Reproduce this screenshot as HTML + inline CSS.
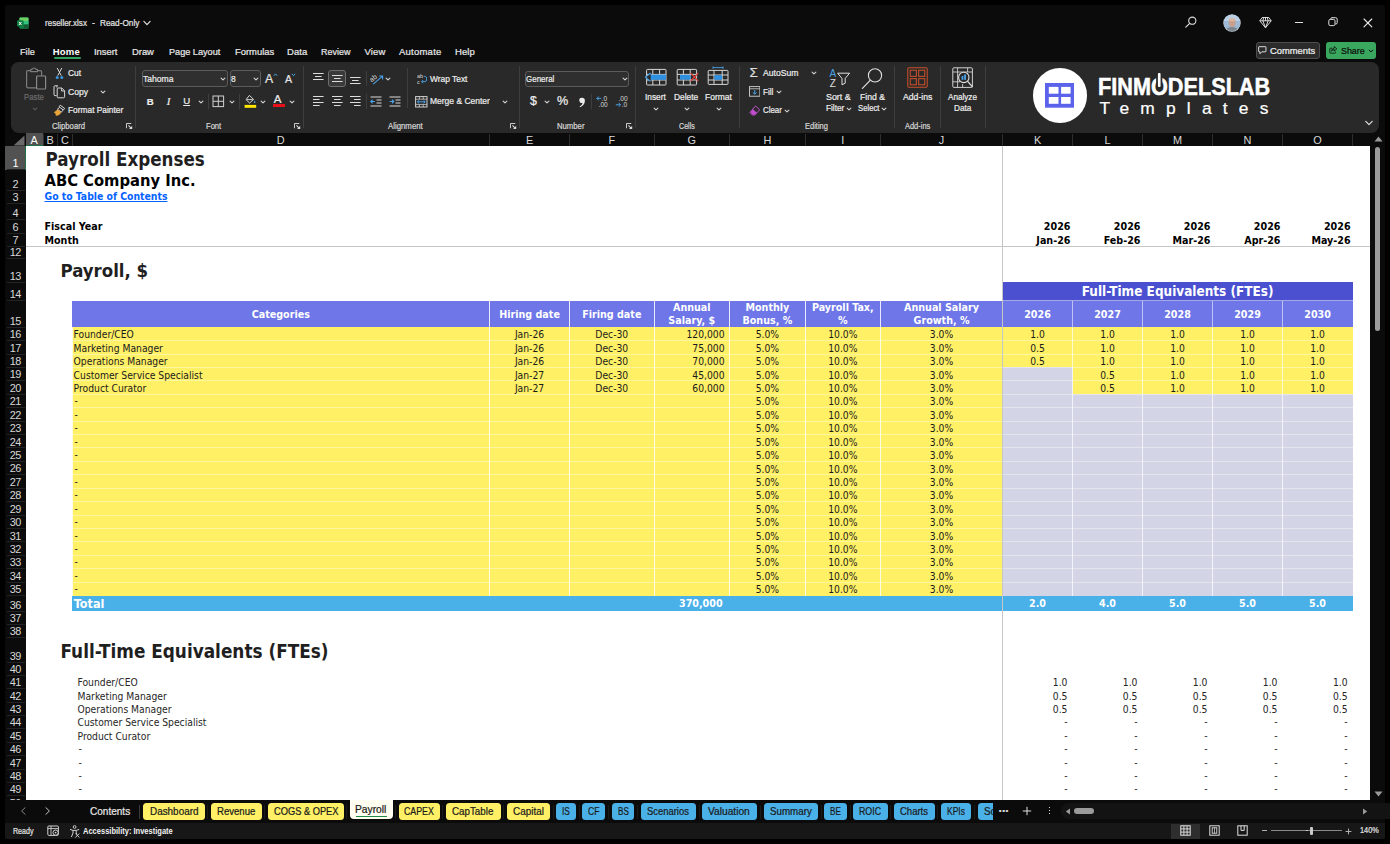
<!DOCTYPE html><html><head><meta charset="utf-8"><title>reseller.xlsx</title><style>html,body{margin:0;padding:0}
body{width:1390px;height:844px;background:#000;position:relative;overflow:hidden;font-family:"Liberation Sans",sans-serif;font-size:11px;color:#e6e6e6}
div,span,svg,a{position:absolute;box-sizing:border-box;white-space:nowrap}
.ui{font-family:"Liberation Sans",sans-serif;-webkit-text-stroke:0.22px currentColor}
.cell{font-family:"DejaVu Sans Condensed","DejaVu Sans",sans-serif;font-stretch:condensed;font-size:10.25px;color:#1a1a1a;line-height:13.42px}
.b{font-weight:bold}
.c{text-align:center}
.r{text-align:right}
.ch{color:#d8d8d8;font-size:10.9px;text-align:center;line-height:15px;top:133px;height:13px}
.rh{color:#d8d8d8;font-size:10.9px;letter-spacing:-0.55px;text-align:center;left:5px;width:20.5px}
.hd{color:#fff;font-weight:bold;text-align:center;font-size:10.65px;line-height:12.6px}
</style></head><body>
<div style="left:5px;top:5px;width:1380px;height:834px;background:#0b0b0b;border-radius:2px"></div>
<svg style="left:17px;top:16.5px" width="12" height="12" viewBox="0 0 12 12"><rect x="2.5" y="0.5" width="9" height="11" rx="1" fill="#21a366"/>
<rect x="2.5" y="0.5" width="9" height="3.6" rx="1" fill="#6fd163"/><rect x="7" y="4" width="4.5" height="3.6" fill="#33c481"/><rect x="2.5" y="7.6" width="9" height="3.9" rx="1" fill="#107c41"/><rect x="7" y="7.6" width="4.5" height="3.9" fill="#185c37"/>
<rect x="0" y="3.2" width="6.4" height="6.4" rx="0.8" fill="#107c41"/><path d="M1.9 4.9L4.5 8M4.5 4.9L1.9 8" stroke="#fff" stroke-width="1" /></svg>
<div class="ui" style="left:45.3px;top:16.2px;line-height:13.4px;font-size:9.4px;color:#e4e4e4;transform:scaleX(0.8553);transform-origin:0 50%;">reseller.xlsx</div>
<div class="ui" style="left:92.2px;top:16.2px;line-height:13.4px;font-size:9.4px;color:#e4e4e4;transform:scaleX(0.9583);transform-origin:0 50%;">-</div>
<div class="ui" style="left:100px;top:16.2px;line-height:13.4px;font-size:9.4px;color:#e4e4e4;transform:scaleX(0.8791);transform-origin:0 50%;">Read-Only</div>
<svg style="left:142.6px;top:20.1px" width="8" height="6" viewBox="0 0 8 6"><path d="M0.8999999999999999 1.45L4 4.55L7.1 1.45" fill="none" stroke="#e0e0e0" stroke-width="1.2" stroke-linecap="round" stroke-linejoin="round"/></svg>
<svg style="left:1184px;top:15px" width="14" height="14" viewBox="0 0 14 14"><circle cx="8.3" cy="5.7" r="3.6" fill="none" stroke="#ddd" stroke-width="1.1"/><path d="M5.7 8.3L1.8 12.2" stroke="#ddd" stroke-width="1.2" stroke-linecap="round"/></svg>
<svg style="left:1222.5px;top:13.5px" width="18" height="18" viewBox="0 0 18 18"><defs><clipPath id="av"><circle cx="9" cy="9" r="8.3"/></clipPath></defs>
<circle cx="9" cy="9" r="8.7" fill="#c8d0d8"/>
<g clip-path="url(#av)"><rect width="18" height="18" fill="#9db9d6"/><rect y="0" width="18" height="7" fill="#b9cfe6"/>
<ellipse cx="9" cy="17.5" rx="7" ry="4.5" fill="#7d8790"/><ellipse cx="9.2" cy="8.6" rx="3.4" ry="4.3" fill="#c79f8c"/><ellipse cx="9.2" cy="5.6" rx="3.2" ry="1.8" fill="#d9b8a6"/></g></svg>
<svg style="left:1258.5px;top:15.5px" width="13" height="13" viewBox="0 0 13 13"><path d="M3.2 1.5H9.8L12.2 4.8L6.5 11.8L0.8 4.8Z M0.8 4.8H12.2 M4.6 1.5L3.9 4.8L6.5 11.8L9.1 4.8L8.4 1.5 M6.5 1.5V4.8" fill="none" stroke="#e6e6e6" stroke-width="0.95" stroke-linejoin="round"/></svg>
<div style="left:1295px;top:21.6px;width:7.5px;height:1.1px;background:#e0e0e0"></div>
<svg style="left:1328px;top:17px" width="10" height="10" viewBox="0 0 10 10"><rect x="0.8" y="2.4" width="6.2" height="6.2" rx="1.4" fill="none" stroke="#e0e0e0" stroke-width="1"/><path d="M2.8 2.2V1.9Q2.8 0.7 4 0.7H7.6Q9.2 0.7 9.2 2.3V5.6Q9.2 7 7.9 7H7.3" fill="none" stroke="#e0e0e0" stroke-width="1"/></svg>
<svg style="left:1363px;top:17.5px" width="10" height="10" viewBox="0 0 10 10"><path d="M1 1L8.8 8.8M8.8 1L1 8.8" stroke="#e8e8e8" stroke-width="1.1" stroke-linecap="round"/></svg>
<div class="ui" style="left:19.7px;top:44.55px;line-height:13.5px;font-size:9.5px;color:#e8e8e8;transform:scaleX(0.9668);transform-origin:0 50%;">File</div>
<div class="ui" style="left:52.8px;top:44.55px;line-height:13.5px;font-size:9.5px;color:#fff;letter-spacing:0.176px;font-weight:bold;-webkit-text-stroke:0;">Home</div>
<div class="ui" style="left:94.3px;top:44.55px;line-height:13.5px;font-size:9.5px;color:#e8e8e8;transform:scaleX(0.9849);transform-origin:0 50%;">Insert</div>
<div class="ui" style="left:132.3px;top:44.55px;line-height:13.5px;font-size:9.5px;color:#e8e8e8;transform:scaleX(0.9879);transform-origin:0 50%;">Draw</div>
<div class="ui" style="left:168.5px;top:44.55px;line-height:13.5px;font-size:9.5px;color:#e8e8e8;transform:scaleX(0.9616);transform-origin:0 50%;">Page Layout</div>
<div class="ui" style="left:234.7px;top:44.55px;line-height:13.5px;font-size:9.5px;color:#e8e8e8;transform:scaleX(0.9901);transform-origin:0 50%;">Formulas</div>
<div class="ui" style="left:287.1px;top:44.55px;line-height:13.5px;font-size:9.5px;color:#e8e8e8;letter-spacing:0.058px;">Data</div>
<div class="ui" style="left:321.3px;top:44.55px;line-height:13.5px;font-size:9.5px;color:#e8e8e8;transform:scaleX(0.9438);transform-origin:0 50%;">Review</div>
<div class="ui" style="left:364.4px;top:44.55px;line-height:13.5px;font-size:9.5px;color:#e8e8e8;letter-spacing:0.170px;">View</div>
<div class="ui" style="left:398.9px;top:44.55px;line-height:13.5px;font-size:9.5px;color:#e8e8e8;letter-spacing:0.255px;">Automate</div>
<div class="ui" style="left:455.1px;top:44.55px;line-height:13.5px;font-size:9.5px;color:#e8e8e8;letter-spacing:0.065px;">Help</div>
<div style="left:53.5px;top:57.2px;width:27px;height:1.6px;background:#2f9f5b;border-radius:1px"></div>
<div style="left:1255.5px;top:41.5px;width:64.5px;height:17.5px;background:#2b2b2b;border:1px solid #4e4e4e;border-radius:3px"></div>
<svg style="left:1258.3px;top:45.6px" width="8.6" height="8.6" viewBox="0 0 9.6 9.6"><path d="M1.2 0.8H8.4Q8.9 0.8 8.9 1.3V6Q8.9 6.5 8.4 6.5H4.2L2.2 8.6V6.5H1.2Q0.7 6.5 0.7 6V1.3Q0.7 0.8 1.2 0.8Z" fill="none" stroke="#e8e8e8" stroke-width="1.05" stroke-linejoin="round"/></svg>
<div class="ui" style="left:1270px;top:44.35px;line-height:13.5px;font-size:9.5px;color:#f0f0f0;transform:scaleX(0.9863);transform-origin:0 50%;">Comments</div>
<div style="left:1326px;top:41.5px;width:50.3px;height:17.5px;background:#3aa75e;border-radius:3px"></div>
<svg style="left:1329px;top:45.6px" width="8.8" height="8" viewBox="0 0 11 10"><path d="M4.2 2.8H1.8Q1 2.8 1 3.6V8.2Q1 9 1.8 9H7.4Q8.2 9 8.2 8.2V7.2" fill="none" stroke="#0b0b0b" stroke-width="0.95"/><path d="M6.6 0.8L9.8 3.6L6.6 6.3V4.6Q4.4 4.5 3.2 6.4Q3.5 3 6.6 2.6Z" fill="none" stroke="#0b0b0b" stroke-width="1" stroke-linejoin="round"/></svg>
<div class="ui" style="left:1340.5px;top:44.35px;line-height:13.5px;font-size:9.5px;color:#0b0b0b;transform:scaleX(0.9349);transform-origin:0 50%;">Share</div>
<svg style="left:1366.6px;top:47.6px" width="8" height="6" viewBox="0 0 8 6"><path d="M2.2 2.1L4 3.9L5.8 2.1" fill="none" stroke="#0b0b0b" stroke-width="1" stroke-linecap="round" stroke-linejoin="round"/></svg>
<div style="left:11px;top:62px;width:1368px;height:71px;background:#292929;border-radius:8px"></div>
<div style="left:135px;top:66px;width:1px;height:62px;background:#3e3e3e"></div>
<div style="left:303px;top:66px;width:1px;height:62px;background:#3e3e3e"></div>
<div style="left:518.5px;top:66px;width:1px;height:62px;background:#3e3e3e"></div>
<div style="left:634.5px;top:66px;width:1px;height:62px;background:#3e3e3e"></div>
<div style="left:738.5px;top:66px;width:1px;height:62px;background:#3e3e3e"></div>
<div style="left:894.3px;top:66px;width:1px;height:62px;background:#3e3e3e"></div>
<div style="left:939.5px;top:66px;width:1px;height:62px;background:#3e3e3e"></div>
<div style="left:984.8px;top:66px;width:1px;height:62px;background:#3e3e3e"></div>
<div class="ui" style="left:51.8px;top:121px;line-height:12.2px;font-size:8.2px;color:#d6d6d6;transform:scaleX(0.9430);transform-origin:0 50%;">Clipboard</div>
<div class="ui" style="left:205.7px;top:121px;line-height:12.2px;font-size:8.2px;color:#d6d6d6;transform:scaleX(0.9264);transform-origin:0 50%;">Font</div>
<div class="ui" style="left:387.8px;top:121px;line-height:12.2px;font-size:8.2px;color:#d6d6d6;transform:scaleX(0.9543);transform-origin:0 50%;">Alignment</div>
<div class="ui" style="left:557.1px;top:121px;line-height:12.2px;font-size:8.2px;color:#d6d6d6;transform:scaleX(0.9429);transform-origin:0 50%;">Number</div>
<div class="ui" style="left:678.9px;top:121px;line-height:12.2px;font-size:8.2px;color:#d6d6d6;transform:scaleX(0.8669);transform-origin:0 50%;">Cells</div>
<div class="ui" style="left:805.4px;top:121px;line-height:12.2px;font-size:8.2px;color:#d6d6d6;transform:scaleX(0.9133);transform-origin:0 50%;">Editing</div>
<div class="ui" style="left:904.7px;top:121px;line-height:12.2px;font-size:8.2px;color:#d6d6d6;transform:scaleX(0.9099);transform-origin:0 50%;">Add-ins</div>
<svg style="left:126.3px;top:122.8px" width="6.6" height="6.6" viewBox="0 0 7 7"><path d="M0.5 5.6V0.5H5.6" fill="none" stroke="#dadada" stroke-width="1"/><path d="M2.6 2.6L5.6 5.6" fill="none" stroke="#dadada" stroke-width="1.1"/><path d="M6.6 3V6.6H3Z" fill="#dadada"/></svg>
<svg style="left:294.3px;top:122.8px" width="6.6" height="6.6" viewBox="0 0 7 7"><path d="M0.5 5.6V0.5H5.6" fill="none" stroke="#dadada" stroke-width="1"/><path d="M2.6 2.6L5.6 5.6" fill="none" stroke="#dadada" stroke-width="1.1"/><path d="M6.6 3V6.6H3Z" fill="#dadada"/></svg>
<svg style="left:510.3px;top:122.8px" width="6.6" height="6.6" viewBox="0 0 7 7"><path d="M0.5 5.6V0.5H5.6" fill="none" stroke="#dadada" stroke-width="1"/><path d="M2.6 2.6L5.6 5.6" fill="none" stroke="#dadada" stroke-width="1.1"/><path d="M6.6 3V6.6H3Z" fill="#dadada"/></svg>
<svg style="left:626.3px;top:122.8px" width="6.6" height="6.6" viewBox="0 0 7 7"><path d="M0.5 5.6V0.5H5.6" fill="none" stroke="#dadada" stroke-width="1"/><path d="M2.6 2.6L5.6 5.6" fill="none" stroke="#dadada" stroke-width="1.1"/><path d="M6.6 3V6.6H3Z" fill="#dadada"/></svg>
<svg style="left:24px;top:66px" width="24" height="25" viewBox="0 0 24 25"><rect x="2.6" y="4.6" width="15" height="17.2" rx="1.2" fill="none" stroke="#7c7c7c" stroke-width="1.2"/>
<path d="M6.6 5.6V4.2Q6.6 3.4 7.4 3.4H8.2Q8.6 2 10.1 2Q11.6 2 12 3.4H12.8Q13.6 3.4 13.6 4.2V5.6Z" fill="#292929" stroke="#7c7c7c" stroke-width="1.1" stroke-linejoin="round"/>
<rect x="12.6" y="10" width="9" height="13" rx="0.8" fill="#292929" stroke="#8a8a8a" stroke-width="1.2"/></svg>
<div class="ui" style="left:24.2px;top:91.4px;line-height:13.2px;font-size:9.2px;color:#6b6b6b;transform:scaleX(0.8459);transform-origin:0 50%;">Paste</div>
<svg style="left:30.5px;top:105.8px" width="8" height="6" viewBox="0 0 8 6"><path d="M2.2 2.1L4 3.9L5.8 2.1" fill="none" stroke="#5a5a5a" stroke-width="1.1" stroke-linecap="round" stroke-linejoin="round"/></svg>
<svg style="left:54px;top:66.5px" width="11" height="13" viewBox="0 0 11 13"><path d="M3.2 1L7.2 8.6M7.8 1L3.8 8.6" stroke="#d8d8d8" stroke-width="1" fill="none"/><circle cx="3.2" cy="10.6" r="1.5" fill="#3a96e0"/><circle cx="7.8" cy="10.6" r="1.5" fill="#3a96e0"/></svg>
<div class="ui" style="left:67.6px;top:67.1px;line-height:13.2px;font-size:9.2px;color:#ededed;transform:scaleX(0.9080);transform-origin:0 50%;">Cut</div>
<svg style="left:52.5px;top:85px" width="13" height="14" viewBox="0 0 13 14"><path d="M3.8 2.5V1.6Q3.8 0.8 4.6 0.8H2Q1 0.8 1 1.8V9.6Q1 10.6 2 10.6H3.6" fill="none" stroke="#d8d8d8" stroke-width="1"/><path d="M5.2 3H8.8L11.6 5.8V11.8Q11.6 12.8 10.6 12.8H5.2Q4.2 12.8 4.2 11.8V4Q4.2 3 5.2 3ZM8.6 3.2V6H11.4" fill="none" stroke="#d8d8d8" stroke-width="1" stroke-linejoin="round"/></svg>
<div class="ui" style="left:67.6px;top:85.7px;line-height:13.2px;font-size:9.2px;color:#ededed;transform:scaleX(0.9312);transform-origin:0 50%;">Copy</div>
<svg style="left:99px;top:89px" width="8" height="6" viewBox="0 0 8 6"><path d="M2.1 2.05L4 3.95L5.9 2.05" fill="none" stroke="#d0d0d0" stroke-width="1.1" stroke-linecap="round" stroke-linejoin="round"/></svg>
<svg style="left:53px;top:103.5px" width="13" height="13" viewBox="0 0 13 13"><path d="M7.2 1.2L11.6 4.4L10.4 6L6 2.8Z" fill="none" stroke="#d8d8d8" stroke-width="1" stroke-linejoin="round"/><path d="M6.4 3.6L4.4 5.2L8.4 8.2L9.8 6.2" fill="none" stroke="#d8d8d8" stroke-width="1"/><path d="M4.6 5.8L1.2 8.4Q3.4 9 3 11.4Q6.6 11.6 8 8.2Z" fill="#e8a33a" stroke="#e8a33a" stroke-width="0.6" stroke-linejoin="round"/></svg>
<div class="ui" style="left:67.6px;top:104.3px;line-height:13.2px;font-size:9.2px;color:#ededed;transform:scaleX(0.9089);transform-origin:0 50%;">Format Painter</div>
<div style="left:141.5px;top:70px;width:86.5px;height:17px;background:#2f2f2f;border:1px solid #5c5c5c;border-radius:3px"></div>
<div class="ui" style="left:142.8px;top:72.8px;line-height:13.2px;font-size:9.2px;color:#ededed;transform:scaleX(0.9318);transform-origin:0 50%;">Tahoma</div>
<svg style="left:218.7px;top:76px" width="8" height="6" viewBox="0 0 8 6"><path d="M2.1 2.05L4 3.95L5.9 2.05" fill="none" stroke="#d0d0d0" stroke-width="1.1" stroke-linecap="round" stroke-linejoin="round"/></svg>
<div style="left:229.5px;top:70px;width:31.5px;height:17px;background:#2f2f2f;border:1px solid #5c5c5c;border-radius:3px"></div>
<div class="ui" style="left:230.8px;top:72.8px;line-height:13.2px;font-size:9.2px;color:#ededed;transform:scaleX(0.9185);transform-origin:0 50%;">8</div>
<svg style="left:252px;top:76px" width="8" height="6" viewBox="0 0 8 6"><path d="M2.1 2.05L4 3.95L5.9 2.05" fill="none" stroke="#d0d0d0" stroke-width="1.1" stroke-linecap="round" stroke-linejoin="round"/></svg>
<div class="ui" style="left:265px;top:70.9px;line-height:16.2px;font-size:12.2px;color:#e6e6e6;">A</div>
<svg style="left:272.8px;top:72.5px" width="5" height="3.4" viewBox="0 0 5 3.4"><path d="M0.8 2.8L2.5 0.9L4.2 2.8" fill="none" stroke="#4aa3e8" stroke-width="1"/></svg>
<div class="ui" style="left:285px;top:72.3px;line-height:14.6px;font-size:10.6px;color:#e6e6e6;">A</div>
<svg style="left:291.3px;top:72.8px" width="5" height="3.4" viewBox="0 0 5 3.4"><path d="M0.8 0.8L2.5 2.7L4.2 0.8" fill="none" stroke="#4aa3e8" stroke-width="1"/></svg>
<div class="ui" style="left:146.8px;top:94.8px;line-height:13.6px;font-size:9.6px;color:#ededed;font-weight:bold">B</div>
<div class="ui" style="left:166.8px;top:94.1px;line-height:14.6px;font-size:10.6px;color:#ededed;font-style:italic;font-family:'Liberation Serif',serif;font-size:10.8px">I</div>
<div class="ui" style="left:183.2px;top:94.4px;line-height:13.6px;font-size:9.6px;color:#ededed;text-decoration:underline">U</div>
<svg style="left:196.5px;top:98.6px" width="8" height="6" viewBox="0 0 8 6"><path d="M2.1 2.05L4 3.95L5.9 2.05" fill="none" stroke="#d0d0d0" stroke-width="1.1" stroke-linecap="round" stroke-linejoin="round"/></svg>
<div style="left:207.5px;top:94px;width:1px;height:15px;background:#3e3e3e"></div>
<svg style="left:211.5px;top:95px" width="13" height="13" viewBox="0 0 13 13"><rect x="1" y="1" width="10.6" height="10.6" fill="none" stroke="#d0d0d0" stroke-width="1"/><path d="M6.3 1V11.6M1 6.3H11.6" stroke="#d0d0d0" stroke-width="1"/></svg>
<svg style="left:227.8px;top:98.6px" width="8" height="6" viewBox="0 0 8 6"><path d="M2.1 2.05L4 3.95L5.9 2.05" fill="none" stroke="#d0d0d0" stroke-width="1.1" stroke-linecap="round" stroke-linejoin="round"/></svg>
<div style="left:239px;top:94px;width:1px;height:15px;background:#3e3e3e"></div>
<svg style="left:243.5px;top:93.5px" width="13" height="14" viewBox="0 0 13 14"><path d="M5.4 1.4L9.6 5.4L5.6 9L2 5.6Z" fill="none" stroke="#e0e0e0" stroke-width="0.95" stroke-linejoin="round"/><path d="M3 5.6H8.8" stroke="#e0e0e0" stroke-width="0.9"/><path d="M10.6 6.4Q11.8 8 11.2 8.8Q10.6 9.4 10 8.8Q9.5 8 10.6 6.4Z" fill="#4aa3e8"/><rect x="0.6" y="10.9" width="11.6" height="2.9" fill="#ffe600"/></svg>
<svg style="left:259px;top:98.6px" width="8" height="6" viewBox="0 0 8 6"><path d="M2.1 2.05L4 3.95L5.9 2.05" fill="none" stroke="#d0d0d0" stroke-width="1.1" stroke-linecap="round" stroke-linejoin="round"/></svg>
<div class="ui" style="left:273.8px;top:91.85px;line-height:15.5px;font-size:11.5px;color:#ededed;">A</div>
<div style="left:273px;top:104.4px;width:11.6px;height:2.9px;background:#e8101a"></div>
<svg style="left:288px;top:98.6px" width="8" height="6" viewBox="0 0 8 6"><path d="M2.1 2.05L4 3.95L5.9 2.05" fill="none" stroke="#d0d0d0" stroke-width="1.1" stroke-linecap="round" stroke-linejoin="round"/></svg>
<svg style="left:312.6px;top:72.8px" width="12" height="12" viewBox="0 0 12 12"><rect x="0" y="0" width="10.6" height="1" fill="#dcdcdc"/><rect x="2" y="3" width="6.6" height="1" fill="#dcdcdc"/><rect x="0" y="6" width="10.6" height="1" fill="#dcdcdc"/></svg>
<div style="left:328px;top:70px;width:18px;height:17px;background:#3a3a3a;border:1px solid #6e6e6e;border-radius:3px"></div>
<svg style="left:331.8px;top:75px" width="12" height="12" viewBox="0 0 12 12"><rect x="0" y="0" width="10.6" height="1" fill="#dcdcdc"/><rect x="2" y="3" width="6.6" height="1" fill="#dcdcdc"/><rect x="0" y="6" width="10.6" height="1" fill="#dcdcdc"/></svg>
<svg style="left:350.4px;top:77.4px" width="12" height="12" viewBox="0 0 12 12"><rect x="0" y="0" width="10.6" height="1" fill="#dcdcdc"/><rect x="2" y="3" width="6.6" height="1" fill="#dcdcdc"/><rect x="0" y="6" width="10.6" height="1" fill="#dcdcdc"/></svg>
<div style="left:365.5px;top:71px;width:1px;height:15px;background:#3e3e3e"></div>
<svg style="left:369.5px;top:71.5px" width="15" height="14" viewBox="0 0 15 14"><text x="0.2" y="9" font-family="Liberation Sans, sans-serif" font-size="7" fill="#d8d8d8" transform="rotate(-38 3 8)">ab</text><path d="M3.2 12.2L12.2 4.4M12.6 7.4V4H9.2" fill="none" stroke="#4aa3e8" stroke-width="1.1"/></svg>
<svg style="left:384px;top:76.4px" width="8" height="6" viewBox="0 0 8 6"><path d="M2.1 2.05L4 3.95L5.9 2.05" fill="none" stroke="#d0d0d0" stroke-width="1.1" stroke-linecap="round" stroke-linejoin="round"/></svg>
<div style="left:407px;top:68px;width:1px;height:40px;background:#3e3e3e"></div>
<svg style="left:417px;top:72.8px" width="10.4" height="12.4" viewBox="0 0 12 13"><text x="0" y="5.6" font-family="Liberation Sans, sans-serif" font-size="6.4" fill="#d8d8d8">ab</text><text x="0" y="12" font-family="Liberation Sans, sans-serif" font-size="6.4" fill="#d8d8d8">c</text><path d="M7.8 3.2H9.6Q11.2 3.2 11.2 6.2Q11.2 9.4 9.2 9.4H5.4M7 7.6L5.2 9.4L7 11.2" fill="none" stroke="#4aa3e8" stroke-width="1.1"/></svg>
<div class="ui" style="left:429.5px;top:72.9px;line-height:13.2px;font-size:9.2px;color:#ededed;transform:scaleX(0.9129);transform-origin:0 50%;">Wrap Text</div>
<svg style="left:312.6px;top:96px" width="12" height="12" viewBox="0 0 12 12"><rect x="0" y="0" width="10.6" height="1" fill="#dcdcdc"/><rect x="0" y="3" width="6.6" height="1" fill="#dcdcdc"/><rect x="0" y="6" width="10.6" height="1" fill="#dcdcdc"/><rect x="0" y="9" width="6.6" height="1" fill="#dcdcdc"/></svg>
<svg style="left:331.6px;top:96px" width="12" height="12" viewBox="0 0 12 12"><rect x="0" y="0" width="10.6" height="1" fill="#dcdcdc"/><rect x="2" y="3" width="6.6" height="1" fill="#dcdcdc"/><rect x="0" y="6" width="10.6" height="1" fill="#dcdcdc"/><rect x="2" y="9" width="6.6" height="1" fill="#dcdcdc"/></svg>
<svg style="left:350.4px;top:96px" width="12" height="12" viewBox="0 0 12 12"><rect x="0" y="0" width="10.6" height="1" fill="#dcdcdc"/><rect x="4" y="3" width="6.6" height="1" fill="#dcdcdc"/><rect x="0" y="6" width="10.6" height="1" fill="#dcdcdc"/><rect x="4" y="9" width="6.6" height="1" fill="#dcdcdc"/></svg>
<div style="left:365.5px;top:94px;width:1px;height:15px;background:#3e3e3e"></div>
<svg style="left:369.8px;top:95.5px" width="13" height="12" viewBox="0 0 13 12"><path d="M0.5 1H11.5M6.5 4H11.5M6.5 7H11.5M0.5 10H11.5" stroke="#dcdcdc" stroke-width="1"/><path d="M5 5.5H0.8M2.6 3.7L0.8 5.5L2.6 7.3" fill="none" stroke="#4aa3e8" stroke-width="1.1"/></svg>
<svg style="left:388.6px;top:95.5px" width="13" height="12" viewBox="0 0 13 12"><path d="M0.5 1H11.5M6.5 4H11.5M6.5 7H11.5M0.5 10H11.5" stroke="#dcdcdc" stroke-width="1"/><path d="M0.6 5.5H4.8M3 3.7L4.8 5.5L3 7.3" fill="none" stroke="#4aa3e8" stroke-width="1.1"/></svg>
<svg style="left:415px;top:95.5px" width="13" height="12" viewBox="0 0 13 12"><rect x="0.6" y="0.6" width="11.4" height="10.4" fill="none" stroke="#d0d0d0" stroke-width="1"/><path d="M0.6 3.2H12M0.6 8.4H12M4.4 0.6V3.2M8.2 0.6V3.2M4.4 8.4V11M8.2 8.4V11" stroke="#d0d0d0" stroke-width="0.8"/><path d="M2.4 5.8H10.2M4 4.4L2.4 5.8L4 7.2M8.6 4.4L10.2 5.8L8.6 7.2" fill="none" stroke="#4aa3e8" stroke-width="1"/></svg>
<div class="ui" style="left:429.5px;top:95.4px;line-height:13.2px;font-size:9.2px;color:#ededed;transform:scaleX(0.9224);transform-origin:0 50%;">Merge &amp; Center</div>
<svg style="left:501px;top:98.8px" width="8" height="6" viewBox="0 0 8 6"><path d="M2.1 2.05L4 3.95L5.9 2.05" fill="none" stroke="#d0d0d0" stroke-width="1.1" stroke-linecap="round" stroke-linejoin="round"/></svg>
<div style="left:525.4px;top:70.5px;width:104px;height:16.5px;background:#2f2f2f;border:1px solid #5c5c5c;border-radius:3px"></div>
<div class="ui" style="left:526.4px;top:73px;line-height:13.2px;font-size:9.2px;color:#ededed;transform:scaleX(0.8677);transform-origin:0 50%;">General</div>
<svg style="left:620.7px;top:76.4px" width="8" height="6" viewBox="0 0 8 6"><path d="M2.1 2.05L4 3.95L5.9 2.05" fill="none" stroke="#d0d0d0" stroke-width="1.1" stroke-linecap="round" stroke-linejoin="round"/></svg>
<div class="ui" style="left:530px;top:93.2px;line-height:16.4px;font-size:12.4px;color:#ededed;">$</div>
<svg style="left:543px;top:98.8px" width="8" height="6" viewBox="0 0 8 6"><path d="M2.1 2.05L4 3.95L5.9 2.05" fill="none" stroke="#d0d0d0" stroke-width="1.1" stroke-linecap="round" stroke-linejoin="round"/></svg>
<div class="ui" style="left:557px;top:93.1px;line-height:16.6px;font-size:12.6px;color:#ededed;">%</div>
<svg style="left:578px;top:96.5px" width="8" height="11" viewBox="0 0 8 11"><path d="M4 0.8A2.6 2.6 0 1 0 4.6 5.9Q4.2 8 1.6 9.4L2 10.2Q6.9 8.2 6.9 3.6Q6.8 0.9 4 0.8Z" fill="#ededed"/></svg>
<div style="left:590.8px;top:94px;width:1px;height:15px;background:#3e3e3e"></div>
<svg style="left:596px;top:95px" width="13" height="13" viewBox="0 0 13 13"><text x="5.6" y="5.8" font-family="Liberation Sans, sans-serif" font-size="6.6" fill="#d8d8d8">.0</text><text x="2.6" y="12.2" font-family="Liberation Sans, sans-serif" font-size="6.6" fill="#d8d8d8">.00</text><path d="M5.2 3.4H1M2.7 1.5L0.8 3.4L2.7 5.3" fill="none" stroke="#4aa3e8" stroke-width="1"/></svg>
<svg style="left:614.5px;top:95px" width="13" height="13" viewBox="0 0 13 13"><text x="3.4" y="5.8" font-family="Liberation Sans, sans-serif" font-size="6.6" fill="#d8d8d8">.00</text><text x="6.6" y="12.2" font-family="Liberation Sans, sans-serif" font-size="6.6" fill="#d8d8d8">.0</text><path d="M0.8 9.8H5.4M3.7 7.9L5.6 9.8L3.7 11.7" fill="none" stroke="#4aa3e8" stroke-width="1"/></svg>
<svg style="left:643.5px;top:67.5px" width="24" height="19" viewBox="0 0 24 19"><rect x="2.6" y="1.4" width="19.4" height="15.6" rx="0.8" fill="none" stroke="#d6d6d6" stroke-width="1"/><path d="M2.6 6.4H22M2.6 12H22M8.8 1.4V17M15.6 1.4V17" stroke="#d6d6d6" stroke-width="1"/><rect x="6" y="6.6" width="16" height="5.2" fill="#2f8fe0"/><path d="M6.6 5L1.4 9.2L6.6 13.4" fill="#292929" stroke="#4aa3e8" stroke-width="1.1" stroke-linejoin="round"/></svg>
<svg style="left:676px;top:67.5px" width="24" height="19" viewBox="0 0 24 19"><rect x="1.2" y="1.4" width="19.4" height="15.6" rx="0.8" fill="none" stroke="#d6d6d6" stroke-width="1"/><path d="M1.2 6.4H20.6M1.2 12H20.6M7.4 1.4V17M14.2 1.4V17" stroke="#d6d6d6" stroke-width="1"/><rect x="4" y="6.8" width="10.5" height="4.8" fill="#2f8fe0"/><path d="M14.6 5.2L22.2 13M22.2 5.2L14.6 13" stroke="#e0413a" stroke-width="1.2"/></svg>
<svg style="left:707px;top:66px" width="24" height="19" viewBox="0 0 24 19"><rect x="1.2" y="4.4" width="19.8" height="14" rx="0.8" fill="none" stroke="#d6d6d6" stroke-width="1"/><path d="M1.2 9H21M1.2 14H21M7 4.4V18.4M15.2 4.4V18.4" stroke="#d6d6d6" stroke-width="1"/><rect x="7.4" y="9.2" width="7.6" height="4.6" fill="#2f8fe0"/><path d="M6 1.6H16M6 0.4V2.8M16 0.4V2.8" stroke="#4aa3e8" stroke-width="0.9"/></svg>
<div class="ui" style="left:645.1px;top:91.4px;line-height:13.2px;font-size:9.2px;color:#ededed;transform:scaleX(0.9040);transform-origin:0 50%;">Insert</div>
<svg style="left:651.65px;top:106px" width="8" height="6" viewBox="0 0 8 6"><path d="M2.1 2.05L4 3.95L5.9 2.05" fill="none" stroke="#d0d0d0" stroke-width="1.1" stroke-linecap="round" stroke-linejoin="round"/></svg>
<div class="ui" style="left:674.4px;top:91.4px;line-height:13.2px;font-size:9.2px;color:#ededed;transform:scaleX(0.9137);transform-origin:0 50%;">Delete</div>
<svg style="left:682.7px;top:106px" width="8" height="6" viewBox="0 0 8 6"><path d="M2.1 2.05L4 3.95L5.9 2.05" fill="none" stroke="#d0d0d0" stroke-width="1.1" stroke-linecap="round" stroke-linejoin="round"/></svg>
<div class="ui" style="left:705px;top:91.4px;line-height:13.2px;font-size:9.2px;color:#ededed;transform:scaleX(0.9232);transform-origin:0 50%;">Format</div>
<svg style="left:714.6px;top:106px" width="8" height="6" viewBox="0 0 8 6"><path d="M2.1 2.05L4 3.95L5.9 2.05" fill="none" stroke="#d0d0d0" stroke-width="1.1" stroke-linecap="round" stroke-linejoin="round"/></svg>
<div class="ui" style="left:749.5px;top:63.85px;line-height:17.5px;font-size:13.5px;color:#e0e0e0;">&#931;</div>
<div class="ui" style="left:762.8px;top:66.9px;line-height:13.2px;font-size:9.2px;color:#ededed;transform:scaleX(0.9354);transform-origin:0 50%;">AutoSum</div>
<svg style="left:809.5px;top:70.4px" width="8" height="6" viewBox="0 0 8 6"><path d="M2.1 2.05L4 3.95L5.9 2.05" fill="none" stroke="#d0d0d0" stroke-width="1.1" stroke-linecap="round" stroke-linejoin="round"/></svg>
<svg style="left:748.5px;top:86px" width="11.8" height="11" viewBox="0 0 13 12"><rect x="0.6" y="0.6" width="11.4" height="10.6" fill="none" stroke="#d0d0d0" stroke-width="1"/><path d="M0.6 3H12" stroke="#d0d0d0" stroke-width="0.9"/><path d="M6.3 4.4V8.8M4.2 7L6.3 9L8.4 7" fill="none" stroke="#4aa3e8" stroke-width="1.1"/></svg>
<div class="ui" style="left:762.8px;top:85.5px;line-height:13.2px;font-size:9.2px;color:#ededed;transform:scaleX(0.8849);transform-origin:0 50%;">Fill</div>
<svg style="left:774.5px;top:88.8px" width="8" height="6" viewBox="0 0 8 6"><path d="M2.1 2.05L4 3.95L5.9 2.05" fill="none" stroke="#d0d0d0" stroke-width="1.1" stroke-linecap="round" stroke-linejoin="round"/></svg>
<svg style="left:748.5px;top:104.6px" width="11.8" height="11" viewBox="0 0 13 12"><path d="M7.2 1L11.8 5.2L6.4 11H3.6L1 8.2Z" fill="none" stroke="#c24fd0" stroke-width="1.1" stroke-linejoin="round"/><path d="M4 4.8L8.6 9" stroke="#c24fd0" stroke-width="1"/><path d="M1.6 8L4 10.6H6.4L8.2 8.6L4.4 5Z" fill="#c24fd0"/></svg>
<div class="ui" style="left:762.8px;top:104.4px;line-height:13.2px;font-size:9.2px;color:#ededed;transform:scaleX(0.8596);transform-origin:0 50%;">Clear</div>
<svg style="left:783px;top:107.6px" width="8" height="6" viewBox="0 0 8 6"><path d="M2.1 2.05L4 3.95L5.9 2.05" fill="none" stroke="#d0d0d0" stroke-width="1.1" stroke-linecap="round" stroke-linejoin="round"/></svg>
<svg style="left:827.5px;top:67.5px" width="23" height="21" viewBox="0 0 23 21"><text x="1.4" y="9" font-family="Liberation Sans, sans-serif" font-size="10" fill="#4aa3e8">A</text><text x="1.8" y="19" font-family="Liberation Sans, sans-serif" font-size="10" fill="#e0e0e0">Z</text><path d="M9.6 5.2H21.6L17.2 10.4V15.2L14 16.8V10.4Z" fill="none" stroke="#e0e0e0" stroke-width="1" stroke-linejoin="round"/></svg>
<div class="ui" style="left:826.2px;top:91.4px;line-height:13.2px;font-size:9.2px;color:#ededed;transform:scaleX(0.9661);transform-origin:0 50%;">Sort &amp;</div>
<div class="ui" style="left:826px;top:102.1px;line-height:13.2px;font-size:9.2px;color:#ededed;transform:scaleX(0.8951);transform-origin:0 50%;">Filter</div>
<svg style="left:844.8px;top:105.6px" width="8" height="6" viewBox="0 0 8 6"><path d="M2.1 2.05L4 3.95L5.9 2.05" fill="none" stroke="#d0d0d0" stroke-width="1.1" stroke-linecap="round" stroke-linejoin="round"/></svg>
<svg style="left:861px;top:66.5px" width="23" height="23" viewBox="0 0 23 23"><circle cx="14" cy="8.4" r="6.6" fill="none" stroke="#e0e0e0" stroke-width="1.1"/><path d="M9.4 13.2L1.4 21.4" stroke="#e0e0e0" stroke-width="1.2" stroke-linecap="round"/></svg>
<div class="ui" style="left:860px;top:91.4px;line-height:13.2px;font-size:9.2px;color:#ededed;transform:scaleX(0.9402);transform-origin:0 50%;">Find &amp;</div>
<div class="ui" style="left:857.9px;top:102.1px;line-height:13.2px;font-size:9.2px;color:#ededed;transform:scaleX(0.8408);transform-origin:0 50%;">Select</div>
<svg style="left:880.2px;top:105.6px" width="8" height="6" viewBox="0 0 8 6"><path d="M2.1 2.05L4 3.95L5.9 2.05" fill="none" stroke="#d0d0d0" stroke-width="1.1" stroke-linecap="round" stroke-linejoin="round"/></svg>
<svg style="left:907px;top:67px" width="21" height="21" viewBox="0 0 22 22"><rect x="0.8" y="0.8" width="20.4" height="20.4" rx="1.2" fill="none" stroke="#c8502a" stroke-width="1.1"/><rect x="3.4" y="3.4" width="6.4" height="6.4" fill="none" stroke="#c8502a" stroke-width="1.1"/><rect x="12.2" y="3.4" width="6.4" height="6.4" fill="none" stroke="#c8502a" stroke-width="1.1"/><rect x="3.4" y="12.2" width="6.4" height="6.4" fill="none" stroke="#c8502a" stroke-width="1.1"/><rect x="12.2" y="12.2" width="6.4" height="6.4" fill="none" stroke="#c8502a" stroke-width="1.1"/></svg>
<div class="ui" style="left:903.2px;top:91.4px;line-height:13.2px;font-size:9.2px;color:#ededed;transform:scaleX(0.9425);transform-origin:0 50%;">Add-ins</div>
<svg style="left:952px;top:66.5px" width="22" height="22" viewBox="0 0 22 22"><rect x="0.8" y="0.8" width="19.6" height="19.6" rx="1" fill="none" stroke="#d0d0d0" stroke-width="1"/><path d="M0.8 5H20.4M0.8 14.8H8M5.6 0.8V20.4M15.6 0.8V5M10.6 17V20.4" stroke="#d0d0d0" stroke-width="0.9"/><circle cx="11.8" cy="10.4" r="5.2" fill="#292929" stroke="#e0e0e0" stroke-width="1.1"/><rect x="9.6" y="9" width="1.8" height="3.8" fill="#4aa3e8"/><rect x="12.2" y="7.4" width="1.8" height="5.4" fill="#4aa3e8"/><path d="M15.6 14.4L20.6 20" stroke="#e0e0e0" stroke-width="1.2"/></svg>
<div class="ui" style="left:948.4px;top:91.4px;line-height:13.2px;font-size:9.2px;color:#ededed;transform:scaleX(0.8860);transform-origin:0 50%;">Analyze</div>
<div class="ui" style="left:954px;top:102.1px;line-height:13.2px;font-size:9.2px;color:#ededed;transform:scaleX(0.9005);transform-origin:0 50%;">Data</div>
<div style="left:1032.5px;top:68px;width:54.5px;height:54.5px;background:#fff;border-radius:50%"></div>
<svg style="left:1045.3px;top:82.9px" width="29.1" height="24.7" viewBox="0 0 29.1 24.7"><rect width="29.1" height="24.7" fill="#5a63ea"/><rect x="3.8" y="3.9" width="9.7" height="6.8" fill="#fff"/><rect x="16.1" y="3.9" width="9.5" height="6.8" fill="#fff"/><rect x="3.8" y="14" width="9.7" height="6.8" fill="#fff"/><rect x="16.1" y="14" width="9.5" height="6.8" fill="#fff"/></svg>
<div class="ui" style="left:1098px;top:73.1px;font-size:24.6px;line-height:28px;font-weight:bold;color:#fff;-webkit-text-stroke:0.55px #fff;transform-origin:0 0;transform:scaleX(0.8812)">FINM<span style="position:relative;display:inline-block;line-height:28px">O<span style="position:absolute;left:50%;top:1.2px;width:6.4px;height:14.4px;margin-left:-3.2px;background:#292929"></span><span style="position:absolute;left:50%;top:0.4px;width:3.3px;height:13.4px;margin-left:-1.65px;background:#fff;border-radius:1px"></span></span>DELSLAB</div>
<div class="ui" style="left:1099.5px;top:96.2px;font-size:17.4px;line-height:24px;color:#fff;letter-spacing:11.2px">Templates</div>
<svg style="left:1364.5px;top:120.4px" width="8" height="6" viewBox="0 0 8 6"><path d="M0.7999999999999998 1.4L4 4.6L7.2 1.4" fill="none" stroke="#e0e0e0" stroke-width="1.2" stroke-linecap="round" stroke-linejoin="round"/></svg>
<div style="left:25.5px;top:146px;width:1344.5px;height:654px;background:#fff"></div>
<div style="left:5px;top:133px;width:1380px;height:13px;background:#0b0b0b"></div>
<div class="ch" style="left:25.5px;top:133px;width:17.5px;height:13px;background:#525252;color:#fff;border-bottom:1px solid #1e7145;">A</div>
<div class="ch" style="left:43px;top:133px;width:14.5px;height:13px;">B</div>
<div style="left:42.5px;top:134px;width:1px;height:12px;background:#2e2e2e"></div>
<div class="ch" style="left:57.5px;top:133px;width:14.7px;height:13px;">C</div>
<div style="left:57px;top:134px;width:1px;height:12px;background:#2e2e2e"></div>
<div class="ch" style="left:72.1px;top:133px;width:417.4px;height:13px;">D</div>
<div style="left:71.6px;top:134px;width:1px;height:12px;background:#2e2e2e"></div>
<div class="ch" style="left:489.5px;top:133px;width:80.1px;height:13px;">E</div>
<div style="left:489px;top:134px;width:1px;height:12px;background:#2e2e2e"></div>
<div class="ch" style="left:569.6px;top:133px;width:84.4px;height:13px;">F</div>
<div style="left:569.1px;top:134px;width:1px;height:12px;background:#2e2e2e"></div>
<div class="ch" style="left:654px;top:133px;width:75.6px;height:13px;">G</div>
<div style="left:653.5px;top:134px;width:1px;height:12px;background:#2e2e2e"></div>
<div class="ch" style="left:729.6px;top:133px;width:75.6px;height:13px;">H</div>
<div style="left:729.1px;top:134px;width:1px;height:12px;background:#2e2e2e"></div>
<div class="ch" style="left:805.2px;top:133px;width:75.3px;height:13px;">I</div>
<div style="left:804.7px;top:134px;width:1px;height:12px;background:#2e2e2e"></div>
<div class="ch" style="left:880.5px;top:133px;width:122.1px;height:13px;">J</div>
<div style="left:880px;top:134px;width:1px;height:12px;background:#2e2e2e"></div>
<div class="ch" style="left:1002.6px;top:133px;width:69.9px;height:13px;">K</div>
<div style="left:1002.1px;top:134px;width:1px;height:12px;background:#2e2e2e"></div>
<div class="ch" style="left:1072.5px;top:133px;width:70px;height:13px;">L</div>
<div style="left:1072px;top:134px;width:1px;height:12px;background:#2e2e2e"></div>
<div class="ch" style="left:1142.5px;top:133px;width:70px;height:13px;">M</div>
<div style="left:1142px;top:134px;width:1px;height:12px;background:#2e2e2e"></div>
<div class="ch" style="left:1212.5px;top:133px;width:70px;height:13px;">N</div>
<div style="left:1212px;top:134px;width:1px;height:12px;background:#2e2e2e"></div>
<div class="ch" style="left:1282.5px;top:133px;width:70.1px;height:13px;">O</div>
<div style="left:1282px;top:134px;width:1px;height:12px;background:#2e2e2e"></div>
<div style="left:1352.1px;top:134px;width:1px;height:12px;background:#2e2e2e"></div>
<svg style="left:12px;top:135px" width="13" height="11" viewBox="0 0 13 11"><path d="M12.5 0.5V10.5H1.5Z" fill="#6a6a6a"/></svg>
<div style="left:5px;top:146px;width:20.5px;height:654px;background:#0b0b0b"></div>
<div class="rh" style="left:5px;top:146px;width:20.5px;height:23.7px;background:#525252;color:#fff;border-right:1px solid #1e7145;overflow:hidden;"><span style="left:0;width:20.5px;top:11.3px;line-height:13.4px;text-align:center">1</span></div>
<div class="rh" style="left:5px;top:169.7px;width:20.5px;height:20.3px;overflow:hidden;"><span style="left:0;width:20.5px;top:7.9px;line-height:13.4px;text-align:center">2</span></div>
<div style="left:7px;top:169.2px;width:18px;height:1px;background:#232323"></div>
<div class="rh" style="left:5px;top:190px;width:20.5px;height:13px;overflow:hidden;"><span style="left:0;width:20.5px;top:0.6px;line-height:13.4px;text-align:center">3</span></div>
<div style="left:7px;top:189.5px;width:18px;height:1px;background:#232323"></div>
<div class="rh" style="left:5px;top:203px;width:20.5px;height:16.4px;overflow:hidden;"><span style="left:0;width:20.5px;top:4px;line-height:13.4px;text-align:center">4</span></div>
<div style="left:7px;top:202.5px;width:18px;height:1px;background:#232323"></div>
<div class="rh" style="left:5px;top:219.4px;width:20.5px;height:13.6px;overflow:hidden;"><span style="left:0;width:20.5px;top:1.2px;line-height:13.4px;text-align:center">6</span></div>
<div style="left:7px;top:218.9px;width:18px;height:1px;background:#232323"></div>
<div class="rh" style="left:5px;top:233px;width:20.5px;height:13.6px;overflow:hidden;"><span style="left:0;width:20.5px;top:1.2px;line-height:13.4px;text-align:center">7</span></div>
<div style="left:7px;top:232.5px;width:18px;height:1px;background:#232323"></div>
<div class="rh" style="left:5px;top:246.6px;width:20.5px;height:11.4px;overflow:hidden;"><span style="left:0;width:20.5px;top:-1px;line-height:13.4px;text-align:center">12</span></div>
<div style="left:7px;top:246.1px;width:18px;height:1px;background:#232323"></div>
<div class="rh" style="left:5px;top:258px;width:20.5px;height:24px;overflow:hidden;"><span style="left:0;width:20.5px;top:11.6px;line-height:13.4px;text-align:center">13</span></div>
<div style="left:7px;top:257.5px;width:18px;height:1px;background:#232323"></div>
<div class="rh" style="left:5px;top:282px;width:20.5px;height:18.6px;overflow:hidden;"><span style="left:0;width:20.5px;top:6.2px;line-height:13.4px;text-align:center">14</span></div>
<div style="left:7px;top:281.5px;width:18px;height:1px;background:#232323"></div>
<div class="rh" style="left:5px;top:300.6px;width:20.5px;height:26.6px;overflow:hidden;"><span style="left:0;width:20.5px;top:14.2px;line-height:13.4px;text-align:center">15</span></div>
<div style="left:7px;top:300.1px;width:18px;height:1px;background:#232323"></div>
<div class="rh" style="left:5px;top:327.2px;width:20.5px;height:13.42px;overflow:hidden;"><span style="left:0;width:20.5px;top:1.02px;line-height:13.4px;text-align:center">16</span></div>
<div style="left:7px;top:326.7px;width:18px;height:1px;background:#232323"></div>
<div class="rh" style="left:5px;top:340.62px;width:20.5px;height:13.42px;overflow:hidden;"><span style="left:0;width:20.5px;top:1.02px;line-height:13.4px;text-align:center">17</span></div>
<div style="left:7px;top:340.12px;width:18px;height:1px;background:#232323"></div>
<div class="rh" style="left:5px;top:354.04px;width:20.5px;height:13.42px;overflow:hidden;"><span style="left:0;width:20.5px;top:1.02px;line-height:13.4px;text-align:center">18</span></div>
<div style="left:7px;top:353.54px;width:18px;height:1px;background:#232323"></div>
<div class="rh" style="left:5px;top:367.46px;width:20.5px;height:13.42px;overflow:hidden;"><span style="left:0;width:20.5px;top:1.02px;line-height:13.4px;text-align:center">19</span></div>
<div style="left:7px;top:366.96px;width:18px;height:1px;background:#232323"></div>
<div class="rh" style="left:5px;top:380.88px;width:20.5px;height:13.42px;overflow:hidden;"><span style="left:0;width:20.5px;top:1.02px;line-height:13.4px;text-align:center">20</span></div>
<div style="left:7px;top:380.38px;width:18px;height:1px;background:#232323"></div>
<div class="rh" style="left:5px;top:394.3px;width:20.5px;height:13.42px;overflow:hidden;"><span style="left:0;width:20.5px;top:1.02px;line-height:13.4px;text-align:center">21</span></div>
<div style="left:7px;top:393.8px;width:18px;height:1px;background:#232323"></div>
<div class="rh" style="left:5px;top:407.72px;width:20.5px;height:13.42px;overflow:hidden;"><span style="left:0;width:20.5px;top:1.02px;line-height:13.4px;text-align:center">22</span></div>
<div style="left:7px;top:407.22px;width:18px;height:1px;background:#232323"></div>
<div class="rh" style="left:5px;top:421.14px;width:20.5px;height:13.42px;overflow:hidden;"><span style="left:0;width:20.5px;top:1.02px;line-height:13.4px;text-align:center">23</span></div>
<div style="left:7px;top:420.64px;width:18px;height:1px;background:#232323"></div>
<div class="rh" style="left:5px;top:434.56px;width:20.5px;height:13.42px;overflow:hidden;"><span style="left:0;width:20.5px;top:1.02px;line-height:13.4px;text-align:center">24</span></div>
<div style="left:7px;top:434.06px;width:18px;height:1px;background:#232323"></div>
<div class="rh" style="left:5px;top:447.98px;width:20.5px;height:13.42px;overflow:hidden;"><span style="left:0;width:20.5px;top:1.02px;line-height:13.4px;text-align:center">25</span></div>
<div style="left:7px;top:447.48px;width:18px;height:1px;background:#232323"></div>
<div class="rh" style="left:5px;top:461.4px;width:20.5px;height:13.42px;overflow:hidden;"><span style="left:0;width:20.5px;top:1.02px;line-height:13.4px;text-align:center">26</span></div>
<div style="left:7px;top:460.9px;width:18px;height:1px;background:#232323"></div>
<div class="rh" style="left:5px;top:474.82px;width:20.5px;height:13.42px;overflow:hidden;"><span style="left:0;width:20.5px;top:1.02px;line-height:13.4px;text-align:center">27</span></div>
<div style="left:7px;top:474.32px;width:18px;height:1px;background:#232323"></div>
<div class="rh" style="left:5px;top:488.24px;width:20.5px;height:13.42px;overflow:hidden;"><span style="left:0;width:20.5px;top:1.02px;line-height:13.4px;text-align:center">28</span></div>
<div style="left:7px;top:487.74px;width:18px;height:1px;background:#232323"></div>
<div class="rh" style="left:5px;top:501.66px;width:20.5px;height:13.42px;overflow:hidden;"><span style="left:0;width:20.5px;top:1.02px;line-height:13.4px;text-align:center">29</span></div>
<div style="left:7px;top:501.16px;width:18px;height:1px;background:#232323"></div>
<div class="rh" style="left:5px;top:515.08px;width:20.5px;height:13.42px;overflow:hidden;"><span style="left:0;width:20.5px;top:1.02px;line-height:13.4px;text-align:center">30</span></div>
<div style="left:7px;top:514.58px;width:18px;height:1px;background:#232323"></div>
<div class="rh" style="left:5px;top:528.5px;width:20.5px;height:13.42px;overflow:hidden;"><span style="left:0;width:20.5px;top:1.02px;line-height:13.4px;text-align:center">31</span></div>
<div style="left:7px;top:528px;width:18px;height:1px;background:#232323"></div>
<div class="rh" style="left:5px;top:541.92px;width:20.5px;height:13.42px;overflow:hidden;"><span style="left:0;width:20.5px;top:1.02px;line-height:13.4px;text-align:center">32</span></div>
<div style="left:7px;top:541.42px;width:18px;height:1px;background:#232323"></div>
<div class="rh" style="left:5px;top:555.34px;width:20.5px;height:13.42px;overflow:hidden;"><span style="left:0;width:20.5px;top:1.02px;line-height:13.4px;text-align:center">33</span></div>
<div style="left:7px;top:554.84px;width:18px;height:1px;background:#232323"></div>
<div class="rh" style="left:5px;top:568.76px;width:20.5px;height:13.42px;overflow:hidden;"><span style="left:0;width:20.5px;top:1.02px;line-height:13.4px;text-align:center">34</span></div>
<div style="left:7px;top:568.26px;width:18px;height:1px;background:#232323"></div>
<div class="rh" style="left:5px;top:582.18px;width:20.5px;height:13.42px;overflow:hidden;"><span style="left:0;width:20.5px;top:1.02px;line-height:13.4px;text-align:center">35</span></div>
<div style="left:7px;top:581.68px;width:18px;height:1px;background:#232323"></div>
<div class="rh" style="left:5px;top:595.6px;width:20.5px;height:15.4px;overflow:hidden;"><span style="left:0;width:20.5px;top:3px;line-height:13.4px;text-align:center">36</span></div>
<div style="left:7px;top:595.1px;width:18px;height:1px;background:#232323"></div>
<div class="rh" style="left:5px;top:611px;width:20.5px;height:13.4px;overflow:hidden;"><span style="left:0;width:20.5px;top:1px;line-height:13.4px;text-align:center">37</span></div>
<div style="left:7px;top:610.5px;width:18px;height:1px;background:#232323"></div>
<div class="rh" style="left:5px;top:624.4px;width:20.5px;height:13.4px;overflow:hidden;"><span style="left:0;width:20.5px;top:1px;line-height:13.4px;text-align:center">38</span></div>
<div style="left:7px;top:623.9px;width:18px;height:1px;background:#232323"></div>
<div class="rh" style="left:5px;top:637.8px;width:20.5px;height:24.2px;overflow:hidden;"><span style="left:0;width:20.5px;top:11.8px;line-height:13.4px;text-align:center">39</span></div>
<div style="left:7px;top:637.3px;width:18px;height:1px;background:#232323"></div>
<div class="rh" style="left:5px;top:662px;width:20.5px;height:13.2px;overflow:hidden;"><span style="left:0;width:20.5px;top:0.8px;line-height:13.4px;text-align:center">40</span></div>
<div style="left:7px;top:661.5px;width:18px;height:1px;background:#232323"></div>
<div class="rh" style="left:5px;top:675.2px;width:20.5px;height:13.4px;overflow:hidden;"><span style="left:0;width:20.5px;top:1px;line-height:13.4px;text-align:center">41</span></div>
<div style="left:7px;top:674.7px;width:18px;height:1px;background:#232323"></div>
<div class="rh" style="left:5px;top:688.6px;width:20.5px;height:13.4px;overflow:hidden;"><span style="left:0;width:20.5px;top:1px;line-height:13.4px;text-align:center">42</span></div>
<div style="left:7px;top:688.1px;width:18px;height:1px;background:#232323"></div>
<div class="rh" style="left:5px;top:702px;width:20.5px;height:13.4px;overflow:hidden;"><span style="left:0;width:20.5px;top:1px;line-height:13.4px;text-align:center">43</span></div>
<div style="left:7px;top:701.5px;width:18px;height:1px;background:#232323"></div>
<div class="rh" style="left:5px;top:715.4px;width:20.5px;height:13.4px;overflow:hidden;"><span style="left:0;width:20.5px;top:1px;line-height:13.4px;text-align:center">44</span></div>
<div style="left:7px;top:714.9px;width:18px;height:1px;background:#232323"></div>
<div class="rh" style="left:5px;top:728.8px;width:20.5px;height:13.4px;overflow:hidden;"><span style="left:0;width:20.5px;top:1px;line-height:13.4px;text-align:center">45</span></div>
<div style="left:7px;top:728.3px;width:18px;height:1px;background:#232323"></div>
<div class="rh" style="left:5px;top:742.2px;width:20.5px;height:13.4px;overflow:hidden;"><span style="left:0;width:20.5px;top:1px;line-height:13.4px;text-align:center">46</span></div>
<div style="left:7px;top:741.7px;width:18px;height:1px;background:#232323"></div>
<div class="rh" style="left:5px;top:755.6px;width:20.5px;height:13.4px;overflow:hidden;"><span style="left:0;width:20.5px;top:1px;line-height:13.4px;text-align:center">47</span></div>
<div style="left:7px;top:755.1px;width:18px;height:1px;background:#232323"></div>
<div class="rh" style="left:5px;top:769px;width:20.5px;height:13.4px;overflow:hidden;"><span style="left:0;width:20.5px;top:1px;line-height:13.4px;text-align:center">48</span></div>
<div style="left:7px;top:768.5px;width:18px;height:1px;background:#232323"></div>
<div class="rh" style="left:5px;top:782.4px;width:20.5px;height:13.4px;overflow:hidden;"><span style="left:0;width:20.5px;top:1px;line-height:13.4px;text-align:center">49</span></div>
<div style="left:7px;top:781.9px;width:18px;height:1px;background:#232323"></div>
<div class="rh" style="left:5px;top:795.8px;width:20.5px;height:4.2px;overflow:hidden;"><span style="left:0;width:20.5px;top:1px;line-height:13.4px;text-align:center">50</span></div>
<div style="left:7px;top:795.3px;width:18px;height:1px;background:#232323"></div>
<div class="cell b" style="left:45.5px;top:147.9px;font-size:18.62px;line-height:24px;height:24px;color:#1f1f1f">Payroll Expenses</div>
<div class="cell b" style="left:44.5px;top:170.1px;font-size:16.4px;line-height:21px;height:21px;color:#000">ABC Company Inc.</div>
<div class="cell b" style="left:44.5px;top:189.3px;font-size:10.35px;line-height:14px;height:14px;color:#0563ff;text-decoration:underline">Go to Table of Contents</div>
<div class="cell b" style="left:44.5px;top:220.3px;font-size:10.65px;line-height:13.4px;color:#000">Fiscal Year</div>
<div class="cell b" style="left:44.5px;top:234.1px;font-size:10.65px;line-height:13.4px;color:#000">Month</div>
<div class="cell b r" style="left:1002.6px;width:67.9px;top:220.3px;font-size:10.65px;line-height:13.4px;color:#000">2026</div>
<div class="cell b r" style="left:1002.6px;width:67.9px;top:234.1px;font-size:10.65px;line-height:13.4px;color:#000">Jan-26</div>
<div class="cell b r" style="left:1072.5px;width:68px;top:220.3px;font-size:10.65px;line-height:13.4px;color:#000">2026</div>
<div class="cell b r" style="left:1072.5px;width:68px;top:234.1px;font-size:10.65px;line-height:13.4px;color:#000">Feb-26</div>
<div class="cell b r" style="left:1142.5px;width:68px;top:220.3px;font-size:10.65px;line-height:13.4px;color:#000">2026</div>
<div class="cell b r" style="left:1142.5px;width:68px;top:234.1px;font-size:10.65px;line-height:13.4px;color:#000">Mar-26</div>
<div class="cell b r" style="left:1212.5px;width:68px;top:220.3px;font-size:10.65px;line-height:13.4px;color:#000">2026</div>
<div class="cell b r" style="left:1212.5px;width:68px;top:234.1px;font-size:10.65px;line-height:13.4px;color:#000">Apr-26</div>
<div class="cell b r" style="left:1282.5px;width:68.1px;top:220.3px;font-size:10.65px;line-height:13.4px;color:#000">2026</div>
<div class="cell b r" style="left:1282.5px;width:68.1px;top:234.1px;font-size:10.65px;line-height:13.4px;color:#000">May-26</div>
<div class="cell b" style="left:60.5px;top:258.8px;font-size:18.45px;line-height:24px;height:24px;color:#1f1f1f">Payroll, $</div>
<div class="cell b" style="left:60.5px;top:639.6px;font-size:18.8px;line-height:24px;height:24px;color:#1f1f1f">Full-Time Equivalents (FTEs)</div>
<div style="left:1002.6px;top:282px;width:350px;height:18.5px;background:#4a50d0"></div>
<div style="left:72.1px;top:300.6px;width:1280.5px;height:26.6px;background:#6e76e8"></div>
<div style="left:72.1px;top:327.2px;width:930.5px;height:268.4px;background:#fff066"></div>
<div style="left:72.1px;top:327.2px;width:0.7px;height:268.4px;background:#fffbe0"></div>
<div style="left:1002.6px;top:327.2px;width:350px;height:268.4px;background:#d3d5e6"></div>
<div style="left:1002.6px;top:327.2px;width:350px;height:40.26px;background:#fff066"></div>
<div style="left:1072.5px;top:367.46px;width:280.1px;height:26.84px;background:#fff066"></div>
<div style="left:72.1px;top:595.6px;width:1280.5px;height:15.4px;background:#4ab0e8"></div>
<div style="left:489px;top:300.6px;width:1px;height:295px;background:rgba(255,255,255,.85)"></div>
<div style="left:569.1px;top:300.6px;width:1px;height:295px;background:rgba(255,255,255,.85)"></div>
<div style="left:653.5px;top:300.6px;width:1px;height:295px;background:rgba(255,255,255,.85)"></div>
<div style="left:729.1px;top:300.6px;width:1px;height:295px;background:rgba(255,255,255,.85)"></div>
<div style="left:804.7px;top:300.6px;width:1px;height:295px;background:rgba(255,255,255,.85)"></div>
<div style="left:880px;top:300.6px;width:1px;height:295px;background:rgba(255,255,255,.85)"></div>
<div style="left:1072px;top:300.6px;width:1px;height:26.6px;background:rgba(255,255,255,.55)"></div>
<div style="left:1072px;top:327.2px;width:1px;height:268.4px;background:rgba(255,255,255,.7)"></div>
<div style="left:1142px;top:300.6px;width:1px;height:26.6px;background:rgba(255,255,255,.55)"></div>
<div style="left:1142px;top:327.2px;width:1px;height:268.4px;background:rgba(255,255,255,.7)"></div>
<div style="left:1212px;top:300.6px;width:1px;height:26.6px;background:rgba(255,255,255,.55)"></div>
<div style="left:1212px;top:327.2px;width:1px;height:268.4px;background:rgba(255,255,255,.7)"></div>
<div style="left:1282px;top:300.6px;width:1px;height:26.6px;background:rgba(255,255,255,.55)"></div>
<div style="left:1282px;top:327.2px;width:1px;height:268.4px;background:rgba(255,255,255,.7)"></div>
<div style="left:72.8px;top:340.12px;width:1279.8px;height:1px;background:rgba(255,255,255,.38)"></div>
<div style="left:72.8px;top:353.54px;width:1279.8px;height:1px;background:rgba(255,255,255,.38)"></div>
<div style="left:72.8px;top:366.96px;width:1279.8px;height:1px;background:rgba(255,255,255,.38)"></div>
<div style="left:72.8px;top:380.38px;width:1279.8px;height:1px;background:rgba(255,255,255,.38)"></div>
<div style="left:72.8px;top:393.8px;width:1279.8px;height:1px;background:rgba(255,255,255,.38)"></div>
<div style="left:72.8px;top:407.22px;width:1279.8px;height:1px;background:rgba(255,255,255,.38)"></div>
<div style="left:72.8px;top:420.64px;width:1279.8px;height:1px;background:rgba(255,255,255,.38)"></div>
<div style="left:72.8px;top:434.06px;width:1279.8px;height:1px;background:rgba(255,255,255,.38)"></div>
<div style="left:72.8px;top:447.48px;width:1279.8px;height:1px;background:rgba(255,255,255,.38)"></div>
<div style="left:72.8px;top:460.9px;width:1279.8px;height:1px;background:rgba(255,255,255,.38)"></div>
<div style="left:72.8px;top:474.32px;width:1279.8px;height:1px;background:rgba(255,255,255,.38)"></div>
<div style="left:72.8px;top:487.74px;width:1279.8px;height:1px;background:rgba(255,255,255,.38)"></div>
<div style="left:72.8px;top:501.16px;width:1279.8px;height:1px;background:rgba(255,255,255,.38)"></div>
<div style="left:72.8px;top:514.58px;width:1279.8px;height:1px;background:rgba(255,255,255,.38)"></div>
<div style="left:72.8px;top:528px;width:1279.8px;height:1px;background:rgba(255,255,255,.38)"></div>
<div style="left:72.8px;top:541.42px;width:1279.8px;height:1px;background:rgba(255,255,255,.38)"></div>
<div style="left:72.8px;top:554.84px;width:1279.8px;height:1px;background:rgba(255,255,255,.38)"></div>
<div style="left:72.8px;top:568.26px;width:1279.8px;height:1px;background:rgba(255,255,255,.38)"></div>
<div style="left:72.8px;top:581.68px;width:1279.8px;height:1px;background:rgba(255,255,255,.38)"></div>
<div style="left:1002.6px;top:300.2px;width:350px;height:0.8px;background:rgba(255,255,255,.5)"></div>
<div class="hd cell" style="left:72.1px;width:417.4px;top:301.7px;height:26.6px;line-height:26.6px">Categories</div>
<div class="hd cell" style="left:489.5px;width:80.1px;top:301.7px;height:26.6px;line-height:26.6px">Hiring date</div>
<div class="hd cell" style="left:569.6px;width:84.4px;top:301.7px;height:26.6px;line-height:26.6px">Firing date</div>
<div class="hd cell" style="left:654px;width:75.6px;top:301.1px;height:26px;line-height:13.2px">Annual<br>Salary, $</div>
<div class="hd cell" style="left:729.6px;width:75.6px;top:301.1px;height:26px;line-height:13.2px">Monthly<br>Bonus, %</div>
<div class="hd cell" style="left:805.2px;width:75.3px;top:301.1px;height:26px;line-height:13.2px">Payroll Tax,<br>%</div>
<div class="hd cell" style="left:880.5px;width:122.1px;top:301.1px;height:26px;line-height:13.2px">Annual Salary<br>Growth, %</div>
<div class="hd cell" style="left:1002.6px;width:69.9px;top:301.7px;height:26.6px;line-height:26.6px">2026</div>
<div class="hd cell" style="left:1072.5px;width:70px;top:301.7px;height:26.6px;line-height:26.6px">2027</div>
<div class="hd cell" style="left:1142.5px;width:70px;top:301.7px;height:26.6px;line-height:26.6px">2028</div>
<div class="hd cell" style="left:1212.5px;width:70px;top:301.7px;height:26.6px;line-height:26.6px">2029</div>
<div class="hd cell" style="left:1282.5px;width:70.1px;top:301.7px;height:26.6px;line-height:26.6px">2030</div>
<div class="hd cell" style="left:1002.6px;width:350px;top:282px;height:18.6px;line-height:19.8px;font-size:13.45px">Full-Time Equivalents (FTEs)</div>
<div class="cell " style="left:73.6px;top:328.35px;width:414.4px;height:13.42px;">Founder/CEO</div>
<div class="cell c" style="left:492px;top:328.35px;width:75.1px;height:13.42px;">Jan-26</div>
<div class="cell c" style="left:572.1px;top:328.35px;width:79.4px;height:13.42px;">Dec-30</div>
<div class="cell r" style="left:659px;top:328.35px;width:65.6px;height:13.42px;">120,000</div>
<div class="cell c" style="left:1005.1px;top:328.35px;width:64.9px;height:13.42px;">1.0</div>
<div class="cell c" style="left:1075px;top:328.35px;width:65px;height:13.42px;">1.0</div>
<div class="cell c" style="left:1145px;top:328.35px;width:65px;height:13.42px;">1.0</div>
<div class="cell c" style="left:1215px;top:328.35px;width:65px;height:13.42px;">1.0</div>
<div class="cell c" style="left:1285px;top:328.35px;width:65.1px;height:13.42px;">1.0</div>
<div class="cell c" style="left:732.1px;top:328.35px;width:70.6px;height:13.42px;">5.0%</div>
<div class="cell c" style="left:807.7px;top:328.35px;width:70.3px;height:13.42px;">10.0%</div>
<div class="cell c" style="left:883px;top:328.35px;width:117.1px;height:13.42px;">3.0%</div>
<div class="cell " style="left:73.6px;top:341.77px;width:414.4px;height:13.42px;">Marketing Manager</div>
<div class="cell c" style="left:492px;top:341.77px;width:75.1px;height:13.42px;">Jan-26</div>
<div class="cell c" style="left:572.1px;top:341.77px;width:79.4px;height:13.42px;">Dec-30</div>
<div class="cell r" style="left:659px;top:341.77px;width:65.6px;height:13.42px;">75,000</div>
<div class="cell c" style="left:1005.1px;top:341.77px;width:64.9px;height:13.42px;">0.5</div>
<div class="cell c" style="left:1075px;top:341.77px;width:65px;height:13.42px;">1.0</div>
<div class="cell c" style="left:1145px;top:341.77px;width:65px;height:13.42px;">1.0</div>
<div class="cell c" style="left:1215px;top:341.77px;width:65px;height:13.42px;">1.0</div>
<div class="cell c" style="left:1285px;top:341.77px;width:65.1px;height:13.42px;">1.0</div>
<div class="cell c" style="left:732.1px;top:341.77px;width:70.6px;height:13.42px;">5.0%</div>
<div class="cell c" style="left:807.7px;top:341.77px;width:70.3px;height:13.42px;">10.0%</div>
<div class="cell c" style="left:883px;top:341.77px;width:117.1px;height:13.42px;">3.0%</div>
<div class="cell " style="left:73.6px;top:355.19px;width:414.4px;height:13.42px;">Operations Manager</div>
<div class="cell c" style="left:492px;top:355.19px;width:75.1px;height:13.42px;">Jan-26</div>
<div class="cell c" style="left:572.1px;top:355.19px;width:79.4px;height:13.42px;">Dec-30</div>
<div class="cell r" style="left:659px;top:355.19px;width:65.6px;height:13.42px;">70,000</div>
<div class="cell c" style="left:1005.1px;top:355.19px;width:64.9px;height:13.42px;">0.5</div>
<div class="cell c" style="left:1075px;top:355.19px;width:65px;height:13.42px;">1.0</div>
<div class="cell c" style="left:1145px;top:355.19px;width:65px;height:13.42px;">1.0</div>
<div class="cell c" style="left:1215px;top:355.19px;width:65px;height:13.42px;">1.0</div>
<div class="cell c" style="left:1285px;top:355.19px;width:65.1px;height:13.42px;">1.0</div>
<div class="cell c" style="left:732.1px;top:355.19px;width:70.6px;height:13.42px;">5.0%</div>
<div class="cell c" style="left:807.7px;top:355.19px;width:70.3px;height:13.42px;">10.0%</div>
<div class="cell c" style="left:883px;top:355.19px;width:117.1px;height:13.42px;">3.0%</div>
<div class="cell " style="left:73.6px;top:368.61px;width:414.4px;height:13.42px;">Customer Service Specialist</div>
<div class="cell c" style="left:492px;top:368.61px;width:75.1px;height:13.42px;">Jan-27</div>
<div class="cell c" style="left:572.1px;top:368.61px;width:79.4px;height:13.42px;">Dec-30</div>
<div class="cell r" style="left:659px;top:368.61px;width:65.6px;height:13.42px;">45,000</div>
<div class="cell c" style="left:1075px;top:368.61px;width:65px;height:13.42px;">0.5</div>
<div class="cell c" style="left:1145px;top:368.61px;width:65px;height:13.42px;">1.0</div>
<div class="cell c" style="left:1215px;top:368.61px;width:65px;height:13.42px;">1.0</div>
<div class="cell c" style="left:1285px;top:368.61px;width:65.1px;height:13.42px;">1.0</div>
<div class="cell c" style="left:732.1px;top:368.61px;width:70.6px;height:13.42px;">5.0%</div>
<div class="cell c" style="left:807.7px;top:368.61px;width:70.3px;height:13.42px;">10.0%</div>
<div class="cell c" style="left:883px;top:368.61px;width:117.1px;height:13.42px;">3.0%</div>
<div class="cell " style="left:73.6px;top:382.03px;width:414.4px;height:13.42px;">Product Curator</div>
<div class="cell c" style="left:492px;top:382.03px;width:75.1px;height:13.42px;">Jan-27</div>
<div class="cell c" style="left:572.1px;top:382.03px;width:79.4px;height:13.42px;">Dec-30</div>
<div class="cell r" style="left:659px;top:382.03px;width:65.6px;height:13.42px;">60,000</div>
<div class="cell c" style="left:1075px;top:382.03px;width:65px;height:13.42px;">0.5</div>
<div class="cell c" style="left:1145px;top:382.03px;width:65px;height:13.42px;">1.0</div>
<div class="cell c" style="left:1215px;top:382.03px;width:65px;height:13.42px;">1.0</div>
<div class="cell c" style="left:1285px;top:382.03px;width:65.1px;height:13.42px;">1.0</div>
<div class="cell c" style="left:732.1px;top:382.03px;width:70.6px;height:13.42px;">5.0%</div>
<div class="cell c" style="left:807.7px;top:382.03px;width:70.3px;height:13.42px;">10.0%</div>
<div class="cell c" style="left:883px;top:382.03px;width:117.1px;height:13.42px;">3.0%</div>
<div class="cell " style="left:74.6px;top:394.4px;width:412.4px;height:13.42px;">-</div>
<div class="cell c" style="left:732.1px;top:395.45px;width:70.6px;height:13.42px;">5.0%</div>
<div class="cell c" style="left:807.7px;top:395.45px;width:70.3px;height:13.42px;">10.0%</div>
<div class="cell c" style="left:883px;top:395.45px;width:117.1px;height:13.42px;">3.0%</div>
<div class="cell " style="left:74.6px;top:407.82px;width:412.4px;height:13.42px;">-</div>
<div class="cell c" style="left:732.1px;top:408.87px;width:70.6px;height:13.42px;">5.0%</div>
<div class="cell c" style="left:807.7px;top:408.87px;width:70.3px;height:13.42px;">10.0%</div>
<div class="cell c" style="left:883px;top:408.87px;width:117.1px;height:13.42px;">3.0%</div>
<div class="cell " style="left:74.6px;top:421.24px;width:412.4px;height:13.42px;">-</div>
<div class="cell c" style="left:732.1px;top:422.29px;width:70.6px;height:13.42px;">5.0%</div>
<div class="cell c" style="left:807.7px;top:422.29px;width:70.3px;height:13.42px;">10.0%</div>
<div class="cell c" style="left:883px;top:422.29px;width:117.1px;height:13.42px;">3.0%</div>
<div class="cell " style="left:74.6px;top:434.66px;width:412.4px;height:13.42px;">-</div>
<div class="cell c" style="left:732.1px;top:435.71px;width:70.6px;height:13.42px;">5.0%</div>
<div class="cell c" style="left:807.7px;top:435.71px;width:70.3px;height:13.42px;">10.0%</div>
<div class="cell c" style="left:883px;top:435.71px;width:117.1px;height:13.42px;">3.0%</div>
<div class="cell " style="left:74.6px;top:448.08px;width:412.4px;height:13.42px;">-</div>
<div class="cell c" style="left:732.1px;top:449.13px;width:70.6px;height:13.42px;">5.0%</div>
<div class="cell c" style="left:807.7px;top:449.13px;width:70.3px;height:13.42px;">10.0%</div>
<div class="cell c" style="left:883px;top:449.13px;width:117.1px;height:13.42px;">3.0%</div>
<div class="cell " style="left:74.6px;top:461.5px;width:412.4px;height:13.42px;">-</div>
<div class="cell c" style="left:732.1px;top:462.55px;width:70.6px;height:13.42px;">5.0%</div>
<div class="cell c" style="left:807.7px;top:462.55px;width:70.3px;height:13.42px;">10.0%</div>
<div class="cell c" style="left:883px;top:462.55px;width:117.1px;height:13.42px;">3.0%</div>
<div class="cell " style="left:74.6px;top:474.92px;width:412.4px;height:13.42px;">-</div>
<div class="cell c" style="left:732.1px;top:475.97px;width:70.6px;height:13.42px;">5.0%</div>
<div class="cell c" style="left:807.7px;top:475.97px;width:70.3px;height:13.42px;">10.0%</div>
<div class="cell c" style="left:883px;top:475.97px;width:117.1px;height:13.42px;">3.0%</div>
<div class="cell " style="left:74.6px;top:488.34px;width:412.4px;height:13.42px;">-</div>
<div class="cell c" style="left:732.1px;top:489.39px;width:70.6px;height:13.42px;">5.0%</div>
<div class="cell c" style="left:807.7px;top:489.39px;width:70.3px;height:13.42px;">10.0%</div>
<div class="cell c" style="left:883px;top:489.39px;width:117.1px;height:13.42px;">3.0%</div>
<div class="cell " style="left:74.6px;top:501.76px;width:412.4px;height:13.42px;">-</div>
<div class="cell c" style="left:732.1px;top:502.81px;width:70.6px;height:13.42px;">5.0%</div>
<div class="cell c" style="left:807.7px;top:502.81px;width:70.3px;height:13.42px;">10.0%</div>
<div class="cell c" style="left:883px;top:502.81px;width:117.1px;height:13.42px;">3.0%</div>
<div class="cell " style="left:74.6px;top:515.18px;width:412.4px;height:13.42px;">-</div>
<div class="cell c" style="left:732.1px;top:516.23px;width:70.6px;height:13.42px;">5.0%</div>
<div class="cell c" style="left:807.7px;top:516.23px;width:70.3px;height:13.42px;">10.0%</div>
<div class="cell c" style="left:883px;top:516.23px;width:117.1px;height:13.42px;">3.0%</div>
<div class="cell " style="left:74.6px;top:528.6px;width:412.4px;height:13.42px;">-</div>
<div class="cell c" style="left:732.1px;top:529.65px;width:70.6px;height:13.42px;">5.0%</div>
<div class="cell c" style="left:807.7px;top:529.65px;width:70.3px;height:13.42px;">10.0%</div>
<div class="cell c" style="left:883px;top:529.65px;width:117.1px;height:13.42px;">3.0%</div>
<div class="cell " style="left:74.6px;top:542.02px;width:412.4px;height:13.42px;">-</div>
<div class="cell c" style="left:732.1px;top:543.07px;width:70.6px;height:13.42px;">5.0%</div>
<div class="cell c" style="left:807.7px;top:543.07px;width:70.3px;height:13.42px;">10.0%</div>
<div class="cell c" style="left:883px;top:543.07px;width:117.1px;height:13.42px;">3.0%</div>
<div class="cell " style="left:74.6px;top:555.44px;width:412.4px;height:13.42px;">-</div>
<div class="cell c" style="left:732.1px;top:556.49px;width:70.6px;height:13.42px;">5.0%</div>
<div class="cell c" style="left:807.7px;top:556.49px;width:70.3px;height:13.42px;">10.0%</div>
<div class="cell c" style="left:883px;top:556.49px;width:117.1px;height:13.42px;">3.0%</div>
<div class="cell " style="left:74.6px;top:568.86px;width:412.4px;height:13.42px;">-</div>
<div class="cell c" style="left:732.1px;top:569.91px;width:70.6px;height:13.42px;">5.0%</div>
<div class="cell c" style="left:807.7px;top:569.91px;width:70.3px;height:13.42px;">10.0%</div>
<div class="cell c" style="left:883px;top:569.91px;width:117.1px;height:13.42px;">3.0%</div>
<div class="cell " style="left:74.6px;top:582.28px;width:412.4px;height:13.42px;">-</div>
<div class="cell c" style="left:732.1px;top:583.33px;width:70.6px;height:13.42px;">5.0%</div>
<div class="cell c" style="left:807.7px;top:583.33px;width:70.3px;height:13.42px;">10.0%</div>
<div class="cell c" style="left:883px;top:583.33px;width:117.1px;height:13.42px;">3.0%</div>
<div class="cell b" style="left:73.8px;top:596.4px;line-height:15.4px;font-size:12.55px;color:#fff">Total</div>
<div class="cell b r" style="left:654px;width:68.6px;top:595.6px;line-height:15.4px;font-size:10.65px;color:#fff">370,000</div>
<div class="cell b c" style="left:1002.6px;width:69.9px;top:595.6px;line-height:15.4px;font-size:10.65px;color:#fff">2.0</div>
<div class="cell b c" style="left:1072.5px;width:70px;top:595.6px;line-height:15.4px;font-size:10.65px;color:#fff">4.0</div>
<div class="cell b c" style="left:1142.5px;width:70px;top:595.6px;line-height:15.4px;font-size:10.65px;color:#fff">5.0</div>
<div class="cell b c" style="left:1212.5px;width:70px;top:595.6px;line-height:15.4px;font-size:10.65px;color:#fff">5.0</div>
<div class="cell b c" style="left:1282.5px;width:70.1px;top:595.6px;line-height:15.4px;font-size:10.65px;color:#fff">5.0</div>
<div class="cell" style="left:77.5px;top:676.2px;line-height:13.4px;color:#262626">Founder/CEO</div>
<div class="cell r" style="left:1002.6px;width:64.9px;top:676.2px;line-height:13.4px;color:#262626">1.0</div>
<div class="cell r" style="left:1072.5px;width:65px;top:676.2px;line-height:13.4px;color:#262626">1.0</div>
<div class="cell r" style="left:1142.5px;width:65px;top:676.2px;line-height:13.4px;color:#262626">1.0</div>
<div class="cell r" style="left:1212.5px;width:65px;top:676.2px;line-height:13.4px;color:#262626">1.0</div>
<div class="cell r" style="left:1282.5px;width:65.1px;top:676.2px;line-height:13.4px;color:#262626">1.0</div>
<div class="cell" style="left:77.5px;top:689.6px;line-height:13.4px;color:#262626">Marketing Manager</div>
<div class="cell r" style="left:1002.6px;width:64.9px;top:689.6px;line-height:13.4px;color:#262626">0.5</div>
<div class="cell r" style="left:1072.5px;width:65px;top:689.6px;line-height:13.4px;color:#262626">0.5</div>
<div class="cell r" style="left:1142.5px;width:65px;top:689.6px;line-height:13.4px;color:#262626">0.5</div>
<div class="cell r" style="left:1212.5px;width:65px;top:689.6px;line-height:13.4px;color:#262626">0.5</div>
<div class="cell r" style="left:1282.5px;width:65.1px;top:689.6px;line-height:13.4px;color:#262626">0.5</div>
<div class="cell" style="left:77.5px;top:703px;line-height:13.4px;color:#262626">Operations Manager</div>
<div class="cell r" style="left:1002.6px;width:64.9px;top:703px;line-height:13.4px;color:#262626">0.5</div>
<div class="cell r" style="left:1072.5px;width:65px;top:703px;line-height:13.4px;color:#262626">0.5</div>
<div class="cell r" style="left:1142.5px;width:65px;top:703px;line-height:13.4px;color:#262626">0.5</div>
<div class="cell r" style="left:1212.5px;width:65px;top:703px;line-height:13.4px;color:#262626">0.5</div>
<div class="cell r" style="left:1282.5px;width:65.1px;top:703px;line-height:13.4px;color:#262626">0.5</div>
<div class="cell" style="left:77.5px;top:716.4px;line-height:13.4px;color:#262626">Customer Service Specialist</div>
<div class="cell r" style="left:1002.6px;width:64.9px;top:715.4px;line-height:13.4px;color:#262626">-</div>
<div class="cell r" style="left:1072.5px;width:65px;top:715.4px;line-height:13.4px;color:#262626">-</div>
<div class="cell r" style="left:1142.5px;width:65px;top:715.4px;line-height:13.4px;color:#262626">-</div>
<div class="cell r" style="left:1212.5px;width:65px;top:715.4px;line-height:13.4px;color:#262626">-</div>
<div class="cell r" style="left:1282.5px;width:65.1px;top:715.4px;line-height:13.4px;color:#262626">-</div>
<div class="cell" style="left:77.5px;top:729.8px;line-height:13.4px;color:#262626">Product Curator</div>
<div class="cell r" style="left:1002.6px;width:64.9px;top:728.8px;line-height:13.4px;color:#262626">-</div>
<div class="cell r" style="left:1072.5px;width:65px;top:728.8px;line-height:13.4px;color:#262626">-</div>
<div class="cell r" style="left:1142.5px;width:65px;top:728.8px;line-height:13.4px;color:#262626">-</div>
<div class="cell r" style="left:1212.5px;width:65px;top:728.8px;line-height:13.4px;color:#262626">-</div>
<div class="cell r" style="left:1282.5px;width:65.1px;top:728.8px;line-height:13.4px;color:#262626">-</div>
<div class="cell" style="left:78.4px;top:742.2px;line-height:13.4px;color:#262626">-</div>
<div class="cell r" style="left:1002.6px;width:64.9px;top:742.2px;line-height:13.4px;color:#262626">-</div>
<div class="cell r" style="left:1072.5px;width:65px;top:742.2px;line-height:13.4px;color:#262626">-</div>
<div class="cell r" style="left:1142.5px;width:65px;top:742.2px;line-height:13.4px;color:#262626">-</div>
<div class="cell r" style="left:1212.5px;width:65px;top:742.2px;line-height:13.4px;color:#262626">-</div>
<div class="cell r" style="left:1282.5px;width:65.1px;top:742.2px;line-height:13.4px;color:#262626">-</div>
<div class="cell" style="left:78.4px;top:755.6px;line-height:13.4px;color:#262626">-</div>
<div class="cell r" style="left:1002.6px;width:64.9px;top:755.6px;line-height:13.4px;color:#262626">-</div>
<div class="cell r" style="left:1072.5px;width:65px;top:755.6px;line-height:13.4px;color:#262626">-</div>
<div class="cell r" style="left:1142.5px;width:65px;top:755.6px;line-height:13.4px;color:#262626">-</div>
<div class="cell r" style="left:1212.5px;width:65px;top:755.6px;line-height:13.4px;color:#262626">-</div>
<div class="cell r" style="left:1282.5px;width:65.1px;top:755.6px;line-height:13.4px;color:#262626">-</div>
<div class="cell" style="left:78.4px;top:769px;line-height:13.4px;color:#262626">-</div>
<div class="cell r" style="left:1002.6px;width:64.9px;top:769px;line-height:13.4px;color:#262626">-</div>
<div class="cell r" style="left:1072.5px;width:65px;top:769px;line-height:13.4px;color:#262626">-</div>
<div class="cell r" style="left:1142.5px;width:65px;top:769px;line-height:13.4px;color:#262626">-</div>
<div class="cell r" style="left:1212.5px;width:65px;top:769px;line-height:13.4px;color:#262626">-</div>
<div class="cell r" style="left:1282.5px;width:65.1px;top:769px;line-height:13.4px;color:#262626">-</div>
<div class="cell" style="left:78.4px;top:782.4px;line-height:13.4px;color:#262626">-</div>
<div class="cell r" style="left:1002.6px;width:64.9px;top:782.4px;line-height:13.4px;color:#262626">-</div>
<div class="cell r" style="left:1072.5px;width:65px;top:782.4px;line-height:13.4px;color:#262626">-</div>
<div class="cell r" style="left:1142.5px;width:65px;top:782.4px;line-height:13.4px;color:#262626">-</div>
<div class="cell r" style="left:1212.5px;width:65px;top:782.4px;line-height:13.4px;color:#262626">-</div>
<div class="cell r" style="left:1282.5px;width:65.1px;top:782.4px;line-height:13.4px;color:#262626">-</div>
<div class="cell" style="left:78.4px;top:795.8px;line-height:13.4px;color:#262626">-</div>
<div class="cell r" style="left:1002.6px;width:64.9px;top:795.8px;line-height:13.4px;color:#262626">-</div>
<div class="cell r" style="left:1072.5px;width:65px;top:795.8px;line-height:13.4px;color:#262626">-</div>
<div class="cell r" style="left:1142.5px;width:65px;top:795.8px;line-height:13.4px;color:#262626">-</div>
<div class="cell r" style="left:1212.5px;width:65px;top:795.8px;line-height:13.4px;color:#262626">-</div>
<div class="cell r" style="left:1282.5px;width:65.1px;top:795.8px;line-height:13.4px;color:#262626">-</div>
<div style="left:1002.2px;top:146px;width:0.9px;height:654px;background:#c6c6c6"></div>
<div style="left:25.5px;top:246.1px;width:1344.5px;height:0.9px;background:#c6c6c6"></div>
<div style="left:1370.5px;top:133px;width:14.5px;height:667px;background:#0b0b0b"></div>
<svg style="left:1374px;top:136px" width="9" height="6" viewBox="0 0 9 6"><path d="M0.5 5.5L4.5 0.5L8.5 5.5Z" fill="#9a9a9a"/></svg>
<svg style="left:1374px;top:791.3px" width="9" height="6" viewBox="0 0 9 6"><path d="M0.5 0.5L4.5 5.5L8.5 0.5Z" fill="#9a9a9a"/></svg>
<div style="left:1375.2px;top:146.5px;width:5.2px;height:184px;background:#9b9b9b;border-radius:3px"></div>
<div style="left:5px;top:800px;width:1380px;height:39px;background:#0b0b0b"></div>
<div style="left:5px;top:800px;width:1380px;height:23px;background:#0b0b0b"></div>
<div style="left:1061px;top:803.2px;width:1318px;height:15.6px;background:#131313;border-radius:8px 0 0 8px"></div>
<svg style="left:19px;top:806px" width="10" height="10" viewBox="0 0 10 10"><path d="M6.4 1.4L2.6 5L6.4 8.6" fill="none" stroke="#8a8a8a" stroke-width="1"/></svg>
<svg style="left:42px;top:806px" width="10" height="10" viewBox="0 0 10 10"><path d="M3.6 1.4L7.4 5L3.6 8.6" fill="none" stroke="#c8c8c8" stroke-width="1"/></svg>
<div class="ui" style="left:90.4px;top:805.2px;line-height:14.4px;font-size:10.4px;color:#e6e6e6;transform:scaleX(0.9657);transform-origin:0 50%;">Contents</div>
<div style="left:143px;top:802.8px;width:61.5px;height:17.4px;background:#fff066;border-radius:3.5px"></div>
<div class="ui" style="left:149.7px;top:805.2px;line-height:14.4px;font-size:10.4px;color:#1a1a1a;transform:scaleX(0.9532);transform-origin:0 50%;">Dashboard</div>
<div style="left:211px;top:802.8px;width:50.5px;height:17.4px;background:#fff066;border-radius:3.5px"></div>
<div class="ui" style="left:217px;top:805.2px;line-height:14.4px;font-size:10.4px;color:#1a1a1a;transform:scaleX(0.9224);transform-origin:0 50%;">Revenue</div>
<div style="left:267.7px;top:802.8px;width:76.3px;height:17.4px;background:#fff066;border-radius:3.5px"></div>
<div class="ui" style="left:273.5px;top:805.2px;line-height:14.4px;font-size:10.4px;color:#1a1a1a;transform:scaleX(0.8928);transform-origin:0 50%;">COGS &amp; OPEX</div>
<div style="left:349.7px;top:800px;width:43.3px;height:19.4px;background:#fffef0;border-radius:0 0 4px 4px"></div>
<div class="ui" style="left:355.3px;top:802.7px;line-height:14.4px;font-size:10.4px;color:#1a1a1a;transform:scaleX(0.9846);transform-origin:0 50%;">Payroll</div>
<div style="left:355.6px;top:816px;width:31px;height:1.3px;background:#1e8a4a"></div>
<div style="left:398.5px;top:802.8px;width:41.9px;height:17.4px;background:#fff066;border-radius:3.5px"></div>
<div class="ui" style="left:404.4px;top:805.2px;line-height:14.4px;font-size:10.4px;color:#1a1a1a;transform:scaleX(0.8480);transform-origin:0 50%;">CAPEX</div>
<div style="left:446.4px;top:802.8px;width:54.4px;height:17.4px;background:#fff066;border-radius:3.5px"></div>
<div class="ui" style="left:452.4px;top:805.2px;line-height:14.4px;font-size:10.4px;color:#1a1a1a;transform:scaleX(0.9421);transform-origin:0 50%;">CapTable</div>
<div style="left:507px;top:802.8px;width:43px;height:17.4px;background:#fff066;border-radius:3.5px"></div>
<div class="ui" style="left:512.6px;top:805.2px;line-height:14.4px;font-size:10.4px;color:#1a1a1a;transform:scaleX(0.9576);transform-origin:0 50%;">Capital</div>
<div style="left:556px;top:802.8px;width:20px;height:17.4px;background:#4ab0e8;border-radius:3.5px"></div>
<div class="ui" style="left:562px;top:805.2px;line-height:14.4px;font-size:10.4px;color:#1a1a1a;transform:scaleX(0.7938);transform-origin:0 50%;">IS</div>
<div style="left:582px;top:802.8px;width:23.3px;height:17.4px;background:#4ab0e8;border-radius:3.5px"></div>
<div class="ui" style="left:588.2px;top:805.2px;line-height:14.4px;font-size:10.4px;color:#1a1a1a;transform:scaleX(0.8295);transform-origin:0 50%;">CF</div>
<div style="left:611.7px;top:802.8px;width:22.8px;height:17.4px;background:#4ab0e8;border-radius:3.5px"></div>
<div class="ui" style="left:617.7px;top:805.2px;line-height:14.4px;font-size:10.4px;color:#1a1a1a;transform:scaleX(0.7784);transform-origin:0 50%;">BS</div>
<div style="left:640.9px;top:802.8px;width:55px;height:17.4px;background:#4ab0e8;border-radius:3.5px"></div>
<div class="ui" style="left:646.9px;top:805.2px;line-height:14.4px;font-size:10.4px;color:#1a1a1a;transform:scaleX(0.9060);transform-origin:0 50%;">Scenarios</div>
<div style="left:702.2px;top:802.8px;width:54.6px;height:17.4px;background:#4ab0e8;border-radius:3.5px"></div>
<div class="ui" style="left:708.3px;top:805.2px;line-height:14.4px;font-size:10.4px;color:#1a1a1a;transform:scaleX(0.9813);transform-origin:0 50%;">Valuation</div>
<div style="left:763.6px;top:802.8px;width:54.2px;height:17.4px;background:#4ab0e8;border-radius:3.5px"></div>
<div class="ui" style="left:770px;top:805.2px;line-height:14.4px;font-size:10.4px;color:#1a1a1a;transform:scaleX(0.9394);transform-origin:0 50%;">Summary</div>
<div style="left:824.2px;top:802.8px;width:22.4px;height:17.4px;background:#4ab0e8;border-radius:3.5px"></div>
<div class="ui" style="left:830.2px;top:805.2px;line-height:14.4px;font-size:10.4px;color:#1a1a1a;transform:scaleX(0.7784);transform-origin:0 50%;">BE</div>
<div style="left:853.4px;top:802.8px;width:34.4px;height:17.4px;background:#4ab0e8;border-radius:3.5px"></div>
<div class="ui" style="left:859.4px;top:805.2px;line-height:14.4px;font-size:10.4px;color:#1a1a1a;transform:scaleX(0.8462);transform-origin:0 50%;">ROIC</div>
<div style="left:894px;top:802.8px;width:40.5px;height:17.4px;background:#4ab0e8;border-radius:3.5px"></div>
<div class="ui" style="left:900.2px;top:805.2px;line-height:14.4px;font-size:10.4px;color:#1a1a1a;transform:scaleX(0.9141);transform-origin:0 50%;">Charts</div>
<div style="left:941px;top:802.8px;width:30.2px;height:17.4px;background:#4ab0e8;border-radius:3.5px"></div>
<div class="ui" style="left:947.3px;top:805.2px;line-height:14.4px;font-size:10.4px;color:#1a1a1a;transform:scaleX(0.8150);transform-origin:0 50%;">KPIs</div>
<div style="left:139px;top:804.5px;width:1px;height:14px;background:#3a3a3a"></div>
<div style="left:207.2px;top:804.5px;width:1px;height:14px;background:#1b1b1b"></div>
<div style="left:264.2px;top:804.5px;width:1px;height:14px;background:#1b1b1b"></div>
<div style="left:346px;top:804.5px;width:1px;height:14px;background:#1b1b1b"></div>
<div style="left:394.8px;top:804.5px;width:1px;height:14px;background:#1b1b1b"></div>
<div style="left:442.3px;top:804.5px;width:1px;height:14px;background:#1b1b1b"></div>
<div style="left:503.2px;top:804.5px;width:1px;height:14px;background:#1b1b1b"></div>
<div style="left:552.5px;top:804.5px;width:1px;height:14px;background:#1b1b1b"></div>
<div style="left:578.5px;top:804.5px;width:1px;height:14px;background:#1b1b1b"></div>
<div style="left:608px;top:804.5px;width:1px;height:14px;background:#1b1b1b"></div>
<div style="left:637.2px;top:804.5px;width:1px;height:14px;background:#1b1b1b"></div>
<div style="left:698.5px;top:804.5px;width:1px;height:14px;background:#1b1b1b"></div>
<div style="left:759.7px;top:804.5px;width:1px;height:14px;background:#1b1b1b"></div>
<div style="left:820.5px;top:804.5px;width:1px;height:14px;background:#1b1b1b"></div>
<div style="left:849.5px;top:804.5px;width:1px;height:14px;background:#1b1b1b"></div>
<div style="left:890.4px;top:804.5px;width:1px;height:14px;background:#1b1b1b"></div>
<div style="left:937.2px;top:804.5px;width:1px;height:14px;background:#1b1b1b"></div>
<div style="left:974.2px;top:804.5px;width:1px;height:14px;background:#1b1b1b"></div>
<div style="left:978px;top:802.8px;width:14.6px;height:17.4px;background:#4ab0e8;border-radius:3.5px 0 0 3.5px;overflow:hidden"><span class="ui" style="left:5.6px;top:2.4px;font-size:10.4px;line-height:14px;color:#1a1a1a;transform:scaleX(.94);transform-origin:0 50%">Sc</span></div>
<div class="ui" style="left:903.7px;width:200px;text-align:center;top:803px;line-height:16px;font-size:12px;color:#e0e0e0;font-weight:bold;letter-spacing:-0.6px">&#183;&#183;&#183;</div>
<svg style="left:1021.5px;top:806px" width="10" height="10" viewBox="0 0 10 10"><path d="M5 0.8V9.2M0.8 5H9.2" stroke="#e0e0e0" stroke-width="1"/></svg>
<div style="left:1049.3px;top:807.3px;width:1.2px;height:1.2px;background:#e0e0e0"></div>
<div style="left:1049.3px;top:810.3px;width:1.2px;height:1.2px;background:#e0e0e0"></div>
<div style="left:1049.3px;top:813.3px;width:1.2px;height:1.2px;background:#e0e0e0"></div>
<svg style="left:1064.5px;top:807.5px" width="6" height="7" viewBox="0 0 6 7"><path d="M5 0.6V6.4L0.8 3.5Z" fill="#9a9a9a"/></svg>
<div style="left:1073.7px;top:808px;width:20.5px;height:5.6px;background:#9b9b9b;border-radius:3px"></div>
<svg style="left:1361.5px;top:807.5px" width="6" height="7" viewBox="0 0 6 7"><path d="M1 0.6V6.4L5.2 3.5Z" fill="#9a9a9a"/></svg>
<div style="left:5px;top:823px;width:1380px;height:16px;background:#171717;border-radius:0 0 2px 2px"></div>
<div class="ui" style="left:12.7px;top:825px;line-height:12.6px;font-size:8.6px;color:#e0e0e0;transform:scaleX(0.8246);transform-origin:0 50%;">Ready</div>
<svg style="left:46.5px;top:825px" width="13" height="12" viewBox="0 0 13 12"><rect x="0.8" y="1" width="10.6" height="9.4" rx="1" fill="none" stroke="#d0d0d0" stroke-width="1"/><path d="M0.8 3.6H11.4M4 1V10.4" stroke="#d0d0d0" stroke-width="0.9"/><circle cx="8.6" cy="7.6" r="2.6" fill="#161616" stroke="#d0d0d0" stroke-width="1"/><circle cx="8.6" cy="7.6" r="0.9" fill="#d0d0d0"/></svg>
<svg style="left:69px;top:824.5px" width="12" height="13" viewBox="0 0 12 13"><circle cx="5.6" cy="2" r="1.4" fill="none" stroke="#d8d8d8" stroke-width="0.9"/><path d="M1 4.4L4 5.4V8L2.4 12M10.2 4.4L7.2 5.4V8L8.2 9.4M4 5.4H7.2" fill="none" stroke="#d8d8d8" stroke-width="0.95" stroke-linejoin="round"/><path d="M6.4 8.6L10.4 12.4M10.4 8.6L6.4 12.4" stroke="#d8d8d8" stroke-width="0.9"/></svg>
<div class="ui" style="left:82.8px;top:825px;line-height:12.6px;font-size:8.6px;color:#f2f2f2;transform:scaleX(0.8738);transform-origin:0 50%;font-weight:bold;-webkit-text-stroke:0;">Accessibility: Investigate</div>
<div style="left:1171.3px;top:823.5px;width:28.3px;height:15.5px;background:#2e2e2e"></div>
<svg style="left:1179.5px;top:825px" width="11" height="11" viewBox="0 0 11 11"><rect x="0.8" y="0.8" width="9.4" height="9.4" fill="none" stroke="#e6e6e6" stroke-width="1"/><path d="M0.8 3.9H10.2M0.8 7.1H10.2M3.9 0.8V10.2M7.1 0.8V10.2" stroke="#e6e6e6" stroke-width="0.9"/></svg>
<svg style="left:1208.5px;top:825px" width="11" height="11" viewBox="0 0 11 11"><rect x="0.8" y="0.8" width="9.4" height="9.4" fill="none" stroke="#e0e0e0" stroke-width="1"/><rect x="3.2" y="2.8" width="4.6" height="5.4" fill="none" stroke="#e0e0e0" stroke-width="0.9"/><path d="M5.5 2.8V8.2" stroke="#e0e0e0" stroke-width="0.7"/></svg>
<svg style="left:1237px;top:824.5px" width="11" height="11" viewBox="0 0 11 11"><rect x="0.8" y="0.8" width="9.4" height="9.4" fill="none" stroke="#e0e0e0" stroke-width="1"/><path d="M4 0.8V5.4H7.2V0.8" fill="none" stroke="#e0e0e0" stroke-width="1"/></svg>
<div style="left:1261.5px;top:830.3px;width:5px;height:1px;background:#b0b0b0"></div>
<div style="left:1271.2px;top:830.3px;width:70.8px;height:1px;background:#8a8a8a"></div>
<div style="left:1306.4px;top:830.3px;width:2px;height:1px;background:#d0d0d0"></div>
<div style="left:1309.5px;top:826.5px;width:3.2px;height:8.6px;background:#c8c8c8;border-radius:1px"></div>
<svg style="left:1345px;top:827.5px" width="7" height="7" viewBox="0 0 7 7"><path d="M3.5 0.6V6.4M0.6 3.5H6.4" stroke="#b0b0b0" stroke-width="1"/></svg>
<div class="ui" style="left:1360.2px;top:825.2px;line-height:12.2px;font-size:8.2px;color:#e0e0e0;transform:scaleX(0.8964);transform-origin:0 50%;">140%</div>
</body></html>
